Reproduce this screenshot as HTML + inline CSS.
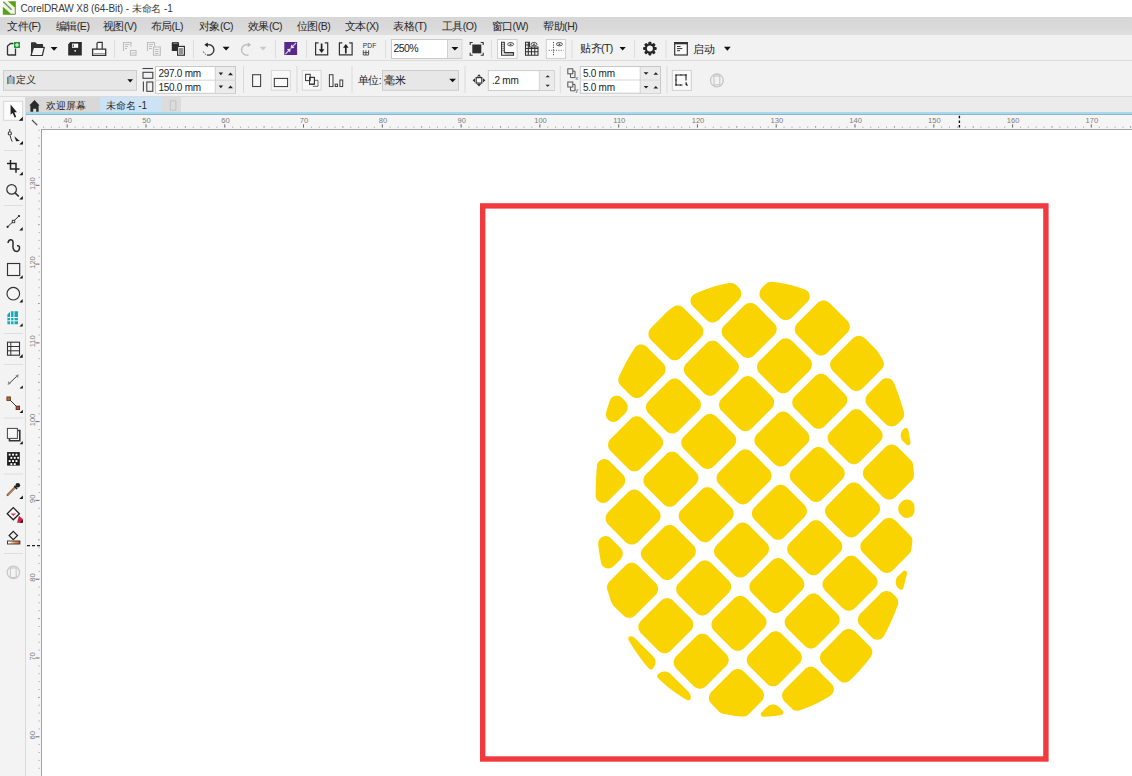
<!DOCTYPE html>
<html><head><meta charset="utf-8">
<style>
html,body{margin:0;padding:0;}
body{width:1132px;height:776px;overflow:hidden;position:relative;background:#f0f0f0;font-family:"Liberation Sans",sans-serif;color:#222;}
.a{position:absolute;}
.mi{position:absolute;top:19px;font-size:10.5px;line-height:14px;color:#2a2a2a;white-space:nowrap;letter-spacing:-0.45px}
svg{position:absolute;left:0;top:0;overflow:visible}
</style></head><body>
<!-- title bar -->
<div class="a" style="left:0;top:0;width:1132px;height:17px;background:#fff"></div>
<svg width="20" height="17" style="left:0;top:0">
 <rect x="2.8" y="1.2" width="13" height="13.5" fill="#eef8df"/>
 <path d="M7.8 1.2 H15.8 V8.6 Z" fill="#5f9f18"/>
 <path d="M2.8 6.8 V14.7 H12.2 Z" fill="#58a016"/>
 <path d="M15.3 8 V14.3 H11" fill="none" stroke="#6f8a5a" stroke-width="1"/>
 <path d="M3.4 1.8 L11.6 9.7" stroke="#7a8a70" stroke-width="1.3"/>
</svg>
<div class="a" style="left:20.5px;top:2.5px;font-size:10px;line-height:12px;color:#3a3a3a;white-space:nowrap;letter-spacing:-0.1px">CorelDRAW X8 (64-Bit) - 未命名 -1</div>
<!-- menu bar -->
<div class="a" style="left:0;top:17px;width:1132px;height:17.5px;background:linear-gradient(#d7d7d7,#d9d9d9 60%,#e0e0e0)"></div>
<span class="mi" style="left:7.4px">文件(F)</span><span class="mi" style="left:55.7px">编辑(E)</span><span class="mi" style="left:102.8px">视图(V)</span><span class="mi" style="left:150.5px">布局(L)</span><span class="mi" style="left:198.8px">对象(C)</span><span class="mi" style="left:247.8px">效果(C)</span><span class="mi" style="left:296.6px">位图(B)</span><span class="mi" style="left:344.9px">文本(X)</span><span class="mi" style="left:393.4px">表格(T)</span><span class="mi" style="left:441.6px">工具(O)</span><span class="mi" style="left:491.5px">窗口(W)</span><span class="mi" style="left:543px">帮助(H)</span>
<!-- standard toolbar -->
<div class="a" style="left:0;top:34.5px;width:1132px;height:26px;background:#f2f2f2"></div>
<div class="a" style="left:0;top:60.3px;width:1132px;height:1px;background:#dcdcdc"></div>
<!-- property bar -->
<div class="a" style="left:0;top:61.3px;width:1132px;height:35.5px;background:#f2f2f2"></div>
<div class="a" style="left:0;top:96.4px;width:1132px;height:1px;background:#dadada"></div>
<!-- tab bar -->
<div class="a" style="left:26px;top:97px;width:1106px;height:15px;background:#ebebeb"></div>
<div class="a" style="left:26px;top:97px;width:74px;height:15px;background:#d8d8d8"></div>
<div class="a" style="left:100px;top:97px;width:62px;height:15px;background:#cce3f6"></div>
<div class="a" style="left:162px;top:97px;width:19px;height:15px;background:#dcdcdc"></div>
<div class="a" style="left:26px;top:112px;width:1106px;height:2px;background:#a6d8ee"></div>
<div class="a" style="left:26px;top:114px;width:1106px;height:0.6px;background:#8fb6c8"></div>
<svg width="200" height="120" style="left:0;top:0">
<path d="M34.5 100 L39.6 105.6 H38.6 V111.7 H36.2 V108.7 H33.2 V111.7 H30.4 V105.6 H29.3 Z" fill="#2a2a2a"/>
<rect x="170.3" y="100.8" width="5.6" height="9.5" rx="1" fill="none" stroke="#c4c4c4" stroke-width="1.1"/>
</svg>
<div class="a" style="left:46px;top:98.5px;font-size:10px;line-height:13px;color:#2a2a2a;white-space:nowrap">欢迎屏幕</div>
<div class="a" style="left:105.5px;top:98.5px;font-size:10px;line-height:13px;color:#2a2a2a;white-space:nowrap">未命名 -1</div>
<!-- toolbox -->
<div class="a" style="left:0;top:97px;width:26px;height:679px;background:#f3f3f3;border-right:1px solid #dadada;box-sizing:border-box"></div>
<!-- rulers -->
<div class="a" style="left:26px;top:114.6px;width:1106px;height:14.4px;background:#f5f5f5"></div>
<div class="a" style="left:26px;top:114.6px;width:15px;height:662px;background:#f5f5f5"></div>
<!-- canvas -->
<div class="a" style="left:41px;top:129px;width:1091px;height:647px;background:#fff;border-left:1px solid #a2a2a2;border-top:1px solid #a2a2a2;box-sizing:border-box"></div>
<svg width="1132" height="776" style="font-family:'Liberation Sans',sans-serif;font-size:7.6px;fill:#7c7c7c">
<rect x="43.1" y="126.6" width="1" height="1.2" fill="#aaa"/>
<rect x="50.9" y="126.6" width="1" height="1.2" fill="#aaa"/>
<rect x="58.8" y="126.6" width="1" height="1.2" fill="#aaa"/>
<rect x="66.7" y="124.3" width="1" height="3.3" fill="#6a6a6a"/>
<rect x="74.6" y="126.6" width="1" height="1.2" fill="#aaa"/>
<rect x="82.5" y="126.6" width="1" height="1.2" fill="#aaa"/>
<rect x="90.3" y="126.6" width="1" height="1.2" fill="#aaa"/>
<rect x="98.2" y="126.6" width="1" height="1.2" fill="#aaa"/>
<rect x="106.1" y="126" width="1" height="1.8" fill="#9a9a9a"/>
<rect x="114.0" y="126.6" width="1" height="1.2" fill="#aaa"/>
<rect x="121.8" y="126.6" width="1" height="1.2" fill="#aaa"/>
<rect x="129.7" y="126.6" width="1" height="1.2" fill="#aaa"/>
<rect x="137.6" y="126.6" width="1" height="1.2" fill="#aaa"/>
<text x="67.8" y="122.8" text-anchor="middle">40</text>
<rect x="145.5" y="124.3" width="1" height="3.3" fill="#6a6a6a"/>
<rect x="153.4" y="126.6" width="1" height="1.2" fill="#aaa"/>
<rect x="161.2" y="126.6" width="1" height="1.2" fill="#aaa"/>
<rect x="169.1" y="126.6" width="1" height="1.2" fill="#aaa"/>
<rect x="177.0" y="126.6" width="1" height="1.2" fill="#aaa"/>
<rect x="184.9" y="126" width="1" height="1.8" fill="#9a9a9a"/>
<rect x="192.7" y="126.6" width="1" height="1.2" fill="#aaa"/>
<rect x="200.6" y="126.6" width="1" height="1.2" fill="#aaa"/>
<rect x="208.5" y="126.6" width="1" height="1.2" fill="#aaa"/>
<rect x="216.4" y="126.6" width="1" height="1.2" fill="#aaa"/>
<text x="146.6" y="122.8" text-anchor="middle">50</text>
<rect x="224.3" y="124.3" width="1" height="3.3" fill="#6a6a6a"/>
<rect x="232.1" y="126.6" width="1" height="1.2" fill="#aaa"/>
<rect x="240.0" y="126.6" width="1" height="1.2" fill="#aaa"/>
<rect x="247.9" y="126.6" width="1" height="1.2" fill="#aaa"/>
<rect x="255.8" y="126.6" width="1" height="1.2" fill="#aaa"/>
<rect x="263.6" y="126" width="1" height="1.8" fill="#9a9a9a"/>
<rect x="271.5" y="126.6" width="1" height="1.2" fill="#aaa"/>
<rect x="279.4" y="126.6" width="1" height="1.2" fill="#aaa"/>
<rect x="287.3" y="126.6" width="1" height="1.2" fill="#aaa"/>
<rect x="295.2" y="126.6" width="1" height="1.2" fill="#aaa"/>
<text x="225.4" y="122.8" text-anchor="middle">60</text>
<rect x="303.0" y="124.3" width="1" height="3.3" fill="#6a6a6a"/>
<rect x="310.9" y="126.6" width="1" height="1.2" fill="#aaa"/>
<rect x="318.8" y="126.6" width="1" height="1.2" fill="#aaa"/>
<rect x="326.7" y="126.6" width="1" height="1.2" fill="#aaa"/>
<rect x="334.6" y="126.6" width="1" height="1.2" fill="#aaa"/>
<rect x="342.4" y="126" width="1" height="1.8" fill="#9a9a9a"/>
<rect x="350.3" y="126.6" width="1" height="1.2" fill="#aaa"/>
<rect x="358.2" y="126.6" width="1" height="1.2" fill="#aaa"/>
<rect x="366.1" y="126.6" width="1" height="1.2" fill="#aaa"/>
<rect x="373.9" y="126.6" width="1" height="1.2" fill="#aaa"/>
<text x="304.1" y="122.8" text-anchor="middle">70</text>
<rect x="381.8" y="124.3" width="1" height="3.3" fill="#6a6a6a"/>
<rect x="389.7" y="126.6" width="1" height="1.2" fill="#aaa"/>
<rect x="397.6" y="126.6" width="1" height="1.2" fill="#aaa"/>
<rect x="405.5" y="126.6" width="1" height="1.2" fill="#aaa"/>
<rect x="413.3" y="126.6" width="1" height="1.2" fill="#aaa"/>
<rect x="421.2" y="126" width="1" height="1.8" fill="#9a9a9a"/>
<rect x="429.1" y="126.6" width="1" height="1.2" fill="#aaa"/>
<rect x="437.0" y="126.6" width="1" height="1.2" fill="#aaa"/>
<rect x="444.8" y="126.6" width="1" height="1.2" fill="#aaa"/>
<rect x="452.7" y="126.6" width="1" height="1.2" fill="#aaa"/>
<text x="382.9" y="122.8" text-anchor="middle">80</text>
<rect x="460.6" y="124.3" width="1" height="3.3" fill="#6a6a6a"/>
<rect x="468.5" y="126.6" width="1" height="1.2" fill="#aaa"/>
<rect x="476.4" y="126.6" width="1" height="1.2" fill="#aaa"/>
<rect x="484.2" y="126.6" width="1" height="1.2" fill="#aaa"/>
<rect x="492.1" y="126.6" width="1" height="1.2" fill="#aaa"/>
<rect x="500.0" y="126" width="1" height="1.8" fill="#9a9a9a"/>
<rect x="507.9" y="126.6" width="1" height="1.2" fill="#aaa"/>
<rect x="515.7" y="126.6" width="1" height="1.2" fill="#aaa"/>
<rect x="523.6" y="126.6" width="1" height="1.2" fill="#aaa"/>
<rect x="531.5" y="126.6" width="1" height="1.2" fill="#aaa"/>
<text x="461.7" y="122.8" text-anchor="middle">90</text>
<rect x="539.4" y="124.3" width="1" height="3.3" fill="#6a6a6a"/>
<rect x="547.3" y="126.6" width="1" height="1.2" fill="#aaa"/>
<rect x="555.1" y="126.6" width="1" height="1.2" fill="#aaa"/>
<rect x="563.0" y="126.6" width="1" height="1.2" fill="#aaa"/>
<rect x="570.9" y="126.6" width="1" height="1.2" fill="#aaa"/>
<rect x="578.8" y="126" width="1" height="1.8" fill="#9a9a9a"/>
<rect x="586.6" y="126.6" width="1" height="1.2" fill="#aaa"/>
<rect x="594.5" y="126.6" width="1" height="1.2" fill="#aaa"/>
<rect x="602.4" y="126.6" width="1" height="1.2" fill="#aaa"/>
<rect x="610.3" y="126.6" width="1" height="1.2" fill="#aaa"/>
<text x="540.5" y="122.8" text-anchor="middle">100</text>
<rect x="618.2" y="124.3" width="1" height="3.3" fill="#6a6a6a"/>
<rect x="626.0" y="126.6" width="1" height="1.2" fill="#aaa"/>
<rect x="633.9" y="126.6" width="1" height="1.2" fill="#aaa"/>
<rect x="641.8" y="126.6" width="1" height="1.2" fill="#aaa"/>
<rect x="649.7" y="126.6" width="1" height="1.2" fill="#aaa"/>
<rect x="657.6" y="126" width="1" height="1.8" fill="#9a9a9a"/>
<rect x="665.4" y="126.6" width="1" height="1.2" fill="#aaa"/>
<rect x="673.3" y="126.6" width="1" height="1.2" fill="#aaa"/>
<rect x="681.2" y="126.6" width="1" height="1.2" fill="#aaa"/>
<rect x="689.1" y="126.6" width="1" height="1.2" fill="#aaa"/>
<text x="619.3" y="122.8" text-anchor="middle">110</text>
<rect x="696.9" y="124.3" width="1" height="3.3" fill="#6a6a6a"/>
<rect x="704.8" y="126.6" width="1" height="1.2" fill="#aaa"/>
<rect x="712.7" y="126.6" width="1" height="1.2" fill="#aaa"/>
<rect x="720.6" y="126.6" width="1" height="1.2" fill="#aaa"/>
<rect x="728.5" y="126.6" width="1" height="1.2" fill="#aaa"/>
<rect x="736.3" y="126" width="1" height="1.8" fill="#9a9a9a"/>
<rect x="744.2" y="126.6" width="1" height="1.2" fill="#aaa"/>
<rect x="752.1" y="126.6" width="1" height="1.2" fill="#aaa"/>
<rect x="760.0" y="126.6" width="1" height="1.2" fill="#aaa"/>
<rect x="767.8" y="126.6" width="1" height="1.2" fill="#aaa"/>
<text x="698.0" y="122.8" text-anchor="middle">120</text>
<rect x="775.7" y="124.3" width="1" height="3.3" fill="#6a6a6a"/>
<rect x="783.6" y="126.6" width="1" height="1.2" fill="#aaa"/>
<rect x="791.5" y="126.6" width="1" height="1.2" fill="#aaa"/>
<rect x="799.4" y="126.6" width="1" height="1.2" fill="#aaa"/>
<rect x="807.2" y="126.6" width="1" height="1.2" fill="#aaa"/>
<rect x="815.1" y="126" width="1" height="1.8" fill="#9a9a9a"/>
<rect x="823.0" y="126.6" width="1" height="1.2" fill="#aaa"/>
<rect x="830.9" y="126.6" width="1" height="1.2" fill="#aaa"/>
<rect x="838.7" y="126.6" width="1" height="1.2" fill="#aaa"/>
<rect x="846.6" y="126.6" width="1" height="1.2" fill="#aaa"/>
<text x="776.8" y="122.8" text-anchor="middle">130</text>
<rect x="854.5" y="124.3" width="1" height="3.3" fill="#6a6a6a"/>
<rect x="862.4" y="126.6" width="1" height="1.2" fill="#aaa"/>
<rect x="870.3" y="126.6" width="1" height="1.2" fill="#aaa"/>
<rect x="878.1" y="126.6" width="1" height="1.2" fill="#aaa"/>
<rect x="886.0" y="126.6" width="1" height="1.2" fill="#aaa"/>
<rect x="893.9" y="126" width="1" height="1.8" fill="#9a9a9a"/>
<rect x="901.8" y="126.6" width="1" height="1.2" fill="#aaa"/>
<rect x="909.6" y="126.6" width="1" height="1.2" fill="#aaa"/>
<rect x="917.5" y="126.6" width="1" height="1.2" fill="#aaa"/>
<rect x="925.4" y="126.6" width="1" height="1.2" fill="#aaa"/>
<text x="855.6" y="122.8" text-anchor="middle">140</text>
<rect x="933.3" y="124.3" width="1" height="3.3" fill="#6a6a6a"/>
<rect x="941.2" y="126.6" width="1" height="1.2" fill="#aaa"/>
<rect x="949.0" y="126.6" width="1" height="1.2" fill="#aaa"/>
<rect x="956.9" y="126.6" width="1" height="1.2" fill="#aaa"/>
<rect x="964.8" y="126.6" width="1" height="1.2" fill="#aaa"/>
<rect x="972.7" y="126" width="1" height="1.8" fill="#9a9a9a"/>
<rect x="980.5" y="126.6" width="1" height="1.2" fill="#aaa"/>
<rect x="988.4" y="126.6" width="1" height="1.2" fill="#aaa"/>
<rect x="996.3" y="126.6" width="1" height="1.2" fill="#aaa"/>
<rect x="1004.2" y="126.6" width="1" height="1.2" fill="#aaa"/>
<text x="934.4" y="122.8" text-anchor="middle">150</text>
<rect x="1012.1" y="124.3" width="1" height="3.3" fill="#6a6a6a"/>
<rect x="1019.9" y="126.6" width="1" height="1.2" fill="#aaa"/>
<rect x="1027.8" y="126.6" width="1" height="1.2" fill="#aaa"/>
<rect x="1035.7" y="126.6" width="1" height="1.2" fill="#aaa"/>
<rect x="1043.6" y="126.6" width="1" height="1.2" fill="#aaa"/>
<rect x="1051.5" y="126" width="1" height="1.8" fill="#9a9a9a"/>
<rect x="1059.3" y="126.6" width="1" height="1.2" fill="#aaa"/>
<rect x="1067.2" y="126.6" width="1" height="1.2" fill="#aaa"/>
<rect x="1075.1" y="126.6" width="1" height="1.2" fill="#aaa"/>
<rect x="1083.0" y="126.6" width="1" height="1.2" fill="#aaa"/>
<text x="1013.2" y="122.8" text-anchor="middle">160</text>
<rect x="1090.8" y="124.3" width="1" height="3.3" fill="#6a6a6a"/>
<rect x="1098.7" y="126.6" width="1" height="1.2" fill="#aaa"/>
<rect x="1106.6" y="126.6" width="1" height="1.2" fill="#aaa"/>
<rect x="1114.5" y="126.6" width="1" height="1.2" fill="#aaa"/>
<rect x="1122.4" y="126.6" width="1" height="1.2" fill="#aaa"/>
<rect x="1130.2" y="126" width="1" height="1.8" fill="#9a9a9a"/>
<text x="1091.9" y="122.8" text-anchor="middle">170</text>
<rect x="38.6" y="129.7" width="1.2" height="1" fill="#aaa"/>
<rect x="38.6" y="137.5" width="1.2" height="1" fill="#aaa"/>
<rect x="38" y="145.4" width="1.8" height="1" fill="#9a9a9a"/>
<rect x="38.6" y="153.3" width="1.2" height="1" fill="#aaa"/>
<rect x="38.6" y="161.2" width="1.2" height="1" fill="#aaa"/>
<rect x="38.6" y="169.0" width="1.2" height="1" fill="#aaa"/>
<rect x="38.6" y="176.9" width="1.2" height="1" fill="#aaa"/>
<rect x="35.5" y="184.8" width="4" height="1" fill="#6a6a6a"/>
<rect x="38.6" y="192.7" width="1.2" height="1" fill="#aaa"/>
<rect x="38.6" y="200.6" width="1.2" height="1" fill="#aaa"/>
<rect x="38.6" y="208.4" width="1.2" height="1" fill="#aaa"/>
<rect x="38.6" y="216.3" width="1.2" height="1" fill="#aaa"/>
<rect x="38" y="224.2" width="1.8" height="1" fill="#9a9a9a"/>
<rect x="38.6" y="232.1" width="1.2" height="1" fill="#aaa"/>
<rect x="38.6" y="239.9" width="1.2" height="1" fill="#aaa"/>
<rect x="38.6" y="247.8" width="1.2" height="1" fill="#aaa"/>
<rect x="38.6" y="255.7" width="1.2" height="1" fill="#aaa"/>
<text transform="translate(35.3 183.7) rotate(-90)" text-anchor="middle">130</text>
<rect x="35.5" y="263.6" width="4" height="1" fill="#6a6a6a"/>
<rect x="38.6" y="271.5" width="1.2" height="1" fill="#aaa"/>
<rect x="38.6" y="279.3" width="1.2" height="1" fill="#aaa"/>
<rect x="38.6" y="287.2" width="1.2" height="1" fill="#aaa"/>
<rect x="38.6" y="295.1" width="1.2" height="1" fill="#aaa"/>
<rect x="38" y="303.0" width="1.8" height="1" fill="#9a9a9a"/>
<rect x="38.6" y="310.8" width="1.2" height="1" fill="#aaa"/>
<rect x="38.6" y="318.7" width="1.2" height="1" fill="#aaa"/>
<rect x="38.6" y="326.6" width="1.2" height="1" fill="#aaa"/>
<rect x="38.6" y="334.5" width="1.2" height="1" fill="#aaa"/>
<text transform="translate(35.3 262.5) rotate(-90)" text-anchor="middle">120</text>
<rect x="35.5" y="342.4" width="4" height="1" fill="#6a6a6a"/>
<rect x="38.6" y="350.2" width="1.2" height="1" fill="#aaa"/>
<rect x="38.6" y="358.1" width="1.2" height="1" fill="#aaa"/>
<rect x="38.6" y="366.0" width="1.2" height="1" fill="#aaa"/>
<rect x="38.6" y="373.9" width="1.2" height="1" fill="#aaa"/>
<rect x="38" y="381.8" width="1.8" height="1" fill="#9a9a9a"/>
<rect x="38.6" y="389.6" width="1.2" height="1" fill="#aaa"/>
<rect x="38.6" y="397.5" width="1.2" height="1" fill="#aaa"/>
<rect x="38.6" y="405.4" width="1.2" height="1" fill="#aaa"/>
<rect x="38.6" y="413.3" width="1.2" height="1" fill="#aaa"/>
<text transform="translate(35.3 341.3) rotate(-90)" text-anchor="middle">110</text>
<rect x="35.5" y="421.1" width="4" height="1" fill="#6a6a6a"/>
<rect x="38.6" y="429.0" width="1.2" height="1" fill="#aaa"/>
<rect x="38.6" y="436.9" width="1.2" height="1" fill="#aaa"/>
<rect x="38.6" y="444.8" width="1.2" height="1" fill="#aaa"/>
<rect x="38.6" y="452.7" width="1.2" height="1" fill="#aaa"/>
<rect x="38" y="460.5" width="1.8" height="1" fill="#9a9a9a"/>
<rect x="38.6" y="468.4" width="1.2" height="1" fill="#aaa"/>
<rect x="38.6" y="476.3" width="1.2" height="1" fill="#aaa"/>
<rect x="38.6" y="484.2" width="1.2" height="1" fill="#aaa"/>
<rect x="38.6" y="492.0" width="1.2" height="1" fill="#aaa"/>
<text transform="translate(35.3 420.0) rotate(-90)" text-anchor="middle">100</text>
<rect x="35.5" y="499.9" width="4" height="1" fill="#6a6a6a"/>
<rect x="38.6" y="507.8" width="1.2" height="1" fill="#aaa"/>
<rect x="38.6" y="515.7" width="1.2" height="1" fill="#aaa"/>
<rect x="38.6" y="523.6" width="1.2" height="1" fill="#aaa"/>
<rect x="38.6" y="531.4" width="1.2" height="1" fill="#aaa"/>
<rect x="38" y="539.3" width="1.8" height="1" fill="#9a9a9a"/>
<rect x="38.6" y="547.2" width="1.2" height="1" fill="#aaa"/>
<rect x="38.6" y="555.1" width="1.2" height="1" fill="#aaa"/>
<rect x="38.6" y="562.9" width="1.2" height="1" fill="#aaa"/>
<rect x="38.6" y="570.8" width="1.2" height="1" fill="#aaa"/>
<text transform="translate(35.3 498.8) rotate(-90)" text-anchor="middle">90</text>
<rect x="35.5" y="578.7" width="4" height="1" fill="#6a6a6a"/>
<rect x="38.6" y="586.6" width="1.2" height="1" fill="#aaa"/>
<rect x="38.6" y="594.5" width="1.2" height="1" fill="#aaa"/>
<rect x="38.6" y="602.3" width="1.2" height="1" fill="#aaa"/>
<rect x="38.6" y="610.2" width="1.2" height="1" fill="#aaa"/>
<rect x="38" y="618.1" width="1.8" height="1" fill="#9a9a9a"/>
<rect x="38.6" y="626.0" width="1.2" height="1" fill="#aaa"/>
<rect x="38.6" y="633.8" width="1.2" height="1" fill="#aaa"/>
<rect x="38.6" y="641.7" width="1.2" height="1" fill="#aaa"/>
<rect x="38.6" y="649.6" width="1.2" height="1" fill="#aaa"/>
<text transform="translate(35.3 577.6) rotate(-90)" text-anchor="middle">80</text>
<rect x="35.5" y="657.5" width="4" height="1" fill="#6a6a6a"/>
<rect x="38.6" y="665.4" width="1.2" height="1" fill="#aaa"/>
<rect x="38.6" y="673.2" width="1.2" height="1" fill="#aaa"/>
<rect x="38.6" y="681.1" width="1.2" height="1" fill="#aaa"/>
<rect x="38.6" y="689.0" width="1.2" height="1" fill="#aaa"/>
<rect x="38" y="696.9" width="1.8" height="1" fill="#9a9a9a"/>
<rect x="38.6" y="704.7" width="1.2" height="1" fill="#aaa"/>
<rect x="38.6" y="712.6" width="1.2" height="1" fill="#aaa"/>
<rect x="38.6" y="720.5" width="1.2" height="1" fill="#aaa"/>
<rect x="38.6" y="728.4" width="1.2" height="1" fill="#aaa"/>
<text transform="translate(35.3 656.4) rotate(-90)" text-anchor="middle">70</text>
<rect x="35.5" y="736.3" width="4" height="1" fill="#6a6a6a"/>
<rect x="38.6" y="744.1" width="1.2" height="1" fill="#aaa"/>
<rect x="38.6" y="752.0" width="1.2" height="1" fill="#aaa"/>
<rect x="38.6" y="759.9" width="1.2" height="1" fill="#aaa"/>
<rect x="38.6" y="767.8" width="1.2" height="1" fill="#aaa"/>
<text transform="translate(35.3 735.2) rotate(-90)" text-anchor="middle">60</text>
<path d="M959.4 115.7 V128" stroke="#111" stroke-width="1.4" stroke-dasharray="2.5 2.2"/>
<path d="M27 545.6 H40.2" stroke="#222" stroke-width="1.3" stroke-dasharray="3 2"/>
<path d="M32 120 L37.3 125.2" stroke="#555" stroke-width="1.2"/>
</svg>
<svg width="1132" height="62" style="left:0;top:0">
<g fill="none" stroke="#333" stroke-width="1.3">
 <!-- new doc -->
 <path d="M7.5 55 V46 L10.5 43.5 H13.5 M15.5 48.5 V55 H7.5"/>
</g>
<rect x="14" y="42" width="6" height="6" fill="#1f9a3c"/>
<rect x="16.5" y="43" width="1" height="4" fill="#fff"/><rect x="15" y="44.5" width="4" height="1" fill="#fff"/>
<!-- open folder -->
<path d="M31 55.5 V42.8 Q31 42.2 31.6 42.2 H35.5 L37 44 H43 V47 H34.5 L32.2 55.5 Z" fill="#333"/>
<path d="M31 55.5 L33.5 47.3 H44.3 L42.3 55.5 Z" fill="#f4f4f4" stroke="#333" stroke-width="1.2" stroke-linejoin="round"/>
<!-- dropdown arrows -->
<path d="M50.6 47 H57.5 L54.05 50.8 Z" fill="#111"/>
<!-- save -->
<path d="M68.2 44.2 L70.4 42 H81.8 V55.5 H68.2 Z" fill="#2b2b2b"/>
<rect x="72" y="43.6" width="6.2" height="4.2" fill="#fff"/>
<rect x="72.6" y="44.4" width="1.2" height="2.6" fill="#555"/>
<circle cx="75.2" cy="50.8" r="0.9" fill="#fff"/>
<!-- print -->
<path d="M97 49 V43.2 L98 42.3 H102.2 V49" fill="#fafafa" stroke="#333" stroke-width="1.2"/>
<path d="M92.6 55.3 V49.2 H105.7 V55.3 Z" fill="#fafafa" stroke="#333" stroke-width="1.3"/>
<path d="M93.5 53.5 H105" stroke="#999" stroke-width="1"/>
<!-- separators -->
<g fill="#dcdcdc">
<rect x="114" y="40" width="1" height="18"/>
<rect x="193" y="40" width="1" height="18"/>
<rect x="275" y="40" width="1" height="18"/>
<rect x="306" y="40" width="1" height="18"/>
<rect x="385" y="40" width="1" height="18"/>
<rect x="491" y="40" width="1" height="18"/>
<rect x="571.5" y="40" width="1" height="18"/>
<rect x="634" y="40" width="1" height="18"/>
<rect x="665.5" y="40" width="1" height="18"/>
</g>
<!-- disabled import-ish -->
<g fill="none" stroke="#bdbdbd" stroke-width="1.1">
 <path d="M123.5 51 V42.5 H131 V46.5"/>
 <path d="M125 44.5 H129.5 M125 46.5 H128 M125 48.5 H127"/>
 <path d="M130.5 50.5 H136 V55.3 H130.5 Z"/>
 <path d="M131.8 53 H134.8"/>
 <path d="M147.5 51 V42.5 H154.5 V46.5"/>
 <path d="M149 44.5 H153 M149 46.5 H152 M149 48.5 H152"/>
 <path d="M153.5 47 H160.3 V55.3 H153.5 Z"/>
 <path d="M155 49.5 H158.5 M155 51.5 H158.5 M155 53.5 H158.5"/>
</g>
<!-- paste -->
<path d="M171.8 43.3 Q171.8 42 173 42 H177.8 Q179 42 179 43.3 V51 H171.8 Z" fill="#2d2d2d"/>
<path d="M173.2 43.2 H177.6" stroke="#aaa" stroke-width="0.9"/>
<rect x="177.6" y="46.4" width="6.8" height="8.8" fill="#f4f4f4" stroke="#333" stroke-width="1.2"/>
<path d="M179 49 H183 M179 51 H183 M179 53 H183" stroke="#333" stroke-width="1.1"/>
<!-- undo -->
<path d="M206.5 45.2 A5.2 5.2 0 1 1 207 54.8" fill="none" stroke="#333" stroke-width="1.4"/>
<path d="M203.2 51.5 L204.3 53 M204.9 54 L206 54.6" stroke="#777" stroke-width="1.1"/>
<path d="M204.3 44.8 L207.8 42.4 V47.2 Z" fill="#222"/>
<path d="M222.6 46.8 H229.6 L226.1 50.6 Z" fill="#111"/>
<!-- redo disabled -->
<path d="M249 45.2 A5.2 5.2 0 1 0 248.5 54.8" fill="none" stroke="#bbb" stroke-width="1.4"/>
<path d="M251.2 44.8 L247.7 42.4 V47.2 Z" fill="#bbb"/>
<path d="M259.7 46.8 H266.4 L263 50.4 Z" fill="#c8c8c8"/>
<!-- purple -->
<rect x="284.3" y="42" width="12.8" height="13" fill="#57298a"/>
<path d="M296 43 L291.6 47.4 M285.4 54 L289.8 49.6" stroke="#d7c7ee" stroke-width="1.2"/>
<path d="M290.6 48.4 L294.5 47.8 L291.2 44.5 Z M290.8 48.6 L286.8 49.2 L290.1 52.5 Z" fill="#e6dcf3"/>
<!-- import / export -->
<g fill="none" stroke="#333" stroke-width="1.2">
 <path d="M318.5 42.8 H315.6 V54.9 H327.7 V42.8 H324.8"/>
 <path d="M342.3 42.8 H339.4 V54.9 H352.1 V42.8 H349.2"/>
</g>
<path d="M321.6 43.5 V50" stroke="#222" stroke-width="1.7"/>
<path d="M318.8 49.3 H324.4 L321.6 53 Z" fill="#222"/>
<path d="M345.8 53.5 V47" stroke="#222" stroke-width="1.7"/>
<path d="M343 47.8 H348.6 L345.8 44 Z" fill="#222"/>
<!-- PDF -->
<text x="362.8" y="48.3" font-family="Liberation Sans" font-size="6.8" fill="#333" textLength="13.6" lengthAdjust="spacingAndGlyphs">PDF</text>
<path d="M363.3 50.3 V55 M363.3 52.6 H368.6 M365.9 50.3 V55 M368.6 50.3 V55 M363.3 55 H368.6" stroke="#444" stroke-width="0.9" fill="none"/>
<!-- zoom combo -->
<rect x="391.5" y="39.5" width="70.3" height="19" fill="#fff" stroke="#c9c9c9" stroke-width="1"/>
<rect x="447.4" y="40" width="14" height="18" fill="#ebebeb"/>
<rect x="447" y="40" width="1" height="18" fill="#d0d0d0"/>
<path d="M451.4 47 H458.4 L454.9 50.6 Z" fill="#111"/>
<!-- zoom fit -->
<path d="M470.2 45 V42.5 H472.7 M480.7 42.5 H483.2 V45 M483.2 52.7 V55.2 H480.7 M472.7 55.2 H470.2 V52.7" fill="none" stroke="#333" stroke-width="1.1"/>
<rect x="472.3" y="44.5" width="9" height="8.8" fill="#2e2e2e"/>
<!-- rulers button -->
<rect x="497.5" y="39.5" width="19.6" height="19" fill="#fbfbfb" stroke="#cfcfcf" stroke-width="1"/>
<path d="M501.6 42.3 H504.3 V52.6 H513.5 V55.3 H501.6 Z" fill="none" stroke="#333" stroke-width="1.1"/>
<path d="M502.5 44.5 H503.5 M502.5 46.5 H503.5 M502.5 48.5 H503.5 M502.5 50.5 H503.5 M506 53.5 V54.5 M508 53.5 V54.5 M510 53.5 V54.5 M512 53.5 V54.5" stroke="#333" stroke-width="0.8"/>
<ellipse cx="510.6" cy="44.2" rx="3" ry="1.7" fill="none" stroke="#444" stroke-width="0.9"/>
<circle cx="510.6" cy="44.4" r="0.9" fill="#444"/>
<!-- grid -->
<path d="M525.5 42.3 H529.5 V47 H538 V55.3 H525.5 Z M525.5 45 H529.5 M525.5 48.5 H538 M525.5 51.8 H538 M528.3 42.3 V55.3 M531.5 47 V55.3 M534.8 47 V55.3" fill="none" stroke="#333" stroke-width="1.05"/>
<ellipse cx="534" cy="44.2" rx="3" ry="1.7" fill="none" stroke="#444" stroke-width="0.9"/>
<circle cx="534" cy="44.4" r="0.9" fill="#444"/>
<!-- guides -->
<rect x="546.3" y="39.5" width="19.3" height="19" fill="#fbfbfb" stroke="#cfcfcf" stroke-width="1"/>
<path d="M553.5 42 V55.3" stroke="#444" stroke-width="0.9" stroke-dasharray="1.2 1.2"/>
<path d="M548.7 50.4 H563.5" stroke="#777" stroke-width="0.9" stroke-dasharray="1.2 1.2"/>
<ellipse cx="559.4" cy="44.2" rx="3" ry="1.7" fill="none" stroke="#444" stroke-width="0.9"/>
<circle cx="559.4" cy="44.4" r="0.9" fill="#444"/>
<path d="M619.5 47 H625.8 L622.65 50.6 Z" fill="#111"/>
<!-- gear -->
<g transform="translate(649.9 48.6)" fill="#262626">
 <circle r="5"/>
 <g id="teeth">
 <rect x="-1.5" y="-6.8" width="3" height="3" rx="0.8"/>
 <rect x="-1.5" y="-6.8" width="3" height="3" rx="0.8" transform="rotate(45)"/>
 <rect x="-1.5" y="-6.8" width="3" height="3" rx="0.8" transform="rotate(90)"/>
 <rect x="-1.5" y="-6.8" width="3" height="3" rx="0.8" transform="rotate(135)"/>
 <rect x="-1.5" y="-6.8" width="3" height="3" rx="0.8" transform="rotate(180)"/>
 <rect x="-1.5" y="-6.8" width="3" height="3" rx="0.8" transform="rotate(225)"/>
 <rect x="-1.5" y="-6.8" width="3" height="3" rx="0.8" transform="rotate(270)"/>
 <rect x="-1.5" y="-6.8" width="3" height="3" rx="0.8" transform="rotate(315)"/>
 </g>
 <circle r="3" fill="#f4f4f4"/>
</g>
<!-- window icon -->
<rect x="674.7" y="42.6" width="12.6" height="12.4" fill="#fafafa" stroke="#333" stroke-width="1.2"/>
<rect x="674.2" y="42" width="13.6" height="2.3" fill="#333"/>
<path d="M677 46.5 H680.5 M677 48.6 H682.3 M677 50.7 H680" stroke="#333" stroke-width="1"/>
<path d="M724 46.7 H730.7 L727.35 50.7 Z" fill="#111"/>
</svg>

<svg width="1132" height="100" style="left:0;top:0">
<!-- preset combo -->
<rect x="3.5" y="70.5" width="133" height="19.8" fill="#e7e7e7" stroke="#cdcdcd" stroke-width="1"/>
<path d="M127.4 79.2 H133 L130.2 82.4 Z" fill="#111"/>
<!-- size icons -->
<path d="M142.5 68.5 H153" stroke="#444" stroke-width="1.1"/>
<rect x="143" y="72.3" width="9.8" height="6" fill="none" stroke="#444" stroke-width="1.1"/>
<path d="M143.4 81.6 V91.5" stroke="#444" stroke-width="1.1"/>
<rect x="146.8" y="82" width="6" height="9.3" fill="none" stroke="#444" stroke-width="1.1"/>
<!-- size input -->
<rect x="155.5" y="66.5" width="80" height="26.8" fill="#fff" stroke="#c8c8c8" stroke-width="1"/>
<rect x="215.5" y="67" width="19.5" height="25.8" fill="#ebebeb"/>
<path d="M155.5 80.2 H235.5" stroke="#d6d6d6" stroke-width="1"/>
<path d="M215.3 66.5 V93.3" stroke="#d0d0d0" stroke-width="1"/>
<path d="M218.6 72.6 H223.1 L220.85 75.3 Z M228 75.3 H233 L230.5 72.6 Z M218.6 85.6 H223.1 L220.85 88.3 Z M228 88.3 H233 L230.5 85.6 Z" fill="#222"/>
<!-- separators -->
<g fill="#dadada">
<rect x="243" y="66" width="1" height="27"/>
<rect x="296.4" y="66" width="1" height="27"/>
<rect x="351.5" y="66" width="1" height="27"/>
<rect x="464.5" y="66" width="1" height="27"/>
<rect x="559.8" y="66" width="1" height="27"/>
<rect x="666.5" y="66" width="1" height="27"/>
</g>
<!-- portrait / landscape -->
<rect x="252.6" y="74.7" width="8" height="11.8" fill="#f8f8f8" stroke="#444" stroke-width="1.1"/>
<rect x="271.3" y="70.5" width="19" height="19.6" fill="#f9f9f9" stroke="#d6d6d6" stroke-width="1"/>
<rect x="274.3" y="78.4" width="13.3" height="8.2" fill="none" stroke="#333" stroke-width="1"/>
<!-- all pages -->
<rect x="302.3" y="70.5" width="18.8" height="19.6" fill="#f9f9f9" stroke="#d6d6d6" stroke-width="1"/>
<path d="M313.2 80.3 H318 V86.3 H312.8" fill="none" stroke="#666" stroke-width="1"/>
<rect x="309.5" y="77.4" width="4.9" height="6.8" fill="#f9f9f9" stroke="#333" stroke-width="1"/>
<rect x="305.6" y="74.3" width="4.6" height="6.3" fill="#f9f9f9" stroke="#333" stroke-width="1"/>
<rect x="309.5" y="77.4" width="4.9" height="6.8" fill="none" stroke="#333" stroke-width="1"/>
<!-- current page -->
<rect x="329.4" y="74.7" width="3.6" height="11.8" fill="#f8f8f8" stroke="#444" stroke-width="1.05"/>
<rect x="335.2" y="84.2" width="2.3" height="2.3" fill="#f8f8f8" stroke="#444" stroke-width="1.05"/>
<rect x="339.9" y="80" width="2.8" height="6.5" fill="#f8f8f8" stroke="#444" stroke-width="1.05"/>
<!-- units combo -->
<rect x="382.5" y="70.5" width="76" height="19.8" fill="#e7e7e7" stroke="#cdcdcd" stroke-width="1"/>
<path d="M449.2 78.8 H456 L452.6 82.2 Z" fill="#111"/>
<!-- nudge icon -->
<g fill="#333">
<path d="M479 74.2 L481.2 76.6 H476.8 Z M479 86.5 L481.2 84.1 H476.8 Z M472.6 80.35 L475 78.2 V82.5 Z M485.4 80.35 L483 78.2 V82.5 Z"/>
</g>
<rect x="476.2" y="77.6" width="5.6" height="5.5" fill="#fafafa" stroke="#333" stroke-width="1.2"/>
<!-- nudge input -->
<rect x="488.3" y="70.6" width="66" height="19.9" fill="#fff" stroke="#cdcdcd" stroke-width="1"/>
<rect x="539.5" y="71.1" width="14.3" height="18.9" fill="#ebebeb"/>
<path d="M539.3 70.6 V90.5" stroke="#d0d0d0" stroke-width="1"/>
<path d="M545.5 77.3 H549.9 L547.7 75.3 Z M545.5 84.8 H549.9 L547.7 86.8 Z" fill="#222"/>
<!-- dup icons -->
<g fill="none" stroke="#555" stroke-width="1">
<rect x="567.8" y="68.8" width="5" height="5"/>
<path d="M570.5 73.8 V77.6 H575 V71.2 H572.8"/>
<rect x="567.8" y="82" width="5" height="5"/>
<path d="M570.5 87 V90.8 H575 V84.4 H572.8"/>
</g>
<text x="575.3" y="79.5" font-family="Liberation Sans" font-size="6" fill="#555">x</text>
<text x="575.3" y="92.4" font-family="Liberation Sans" font-size="6" fill="#555">y</text>
<!-- dup input -->
<rect x="580.3" y="66.5" width="80.2" height="26.7" fill="#fff" stroke="#c8c8c8" stroke-width="1"/>
<rect x="640.4" y="67" width="19.6" height="25.7" fill="#ebebeb"/>
<path d="M580.3 80 H660.5" stroke="#d6d6d6" stroke-width="1"/>
<path d="M640.2 66.5 V93.2" stroke="#d0d0d0" stroke-width="1"/>
<path d="M643.6 72.3 H648.5 L646.05 74.8 Z M653.4 74.8 H658.2 L655.8 72.3 Z M643.6 85.9 H648.5 L646.05 88.4 Z M653.4 88.4 H658.2 L655.8 85.9 Z" fill="#222"/>
<!-- bordered button -->
<rect x="672.3" y="70.4" width="19" height="20" fill="#fafafa" stroke="#d0d0d0" stroke-width="1"/>
<path d="M676 75 H686 V80.5 M676 75 V85 H682.5" fill="none" stroke="#222" stroke-width="1.1"/>
<g fill="#222"><circle cx="676" cy="75" r="0.8"/><circle cx="681" cy="74.9" r="0.7"/><circle cx="686" cy="75" r="0.8"/><circle cx="676" cy="80" r="0.7"/><circle cx="676" cy="85" r="0.8"/><circle cx="680.5" cy="85.1" r="0.7"/></g>
<path d="M686 82.2 L687.5 85.6 L685.8 85 Z" fill="#222" stroke="#222" stroke-width="0.6"/>
<!-- disabled circle -->
<circle cx="716.9" cy="80.4" r="6.4" fill="none" stroke="#c6c6c6" stroke-width="1.3"/>
<rect x="714" y="76" width="5.8" height="8.8" fill="none" stroke="#c6c6c6" stroke-width="1.1"/>
</svg>

<svg width="30" height="776" style="left:0;top:0">
<!-- pick -->
<rect x="3.7" y="101.3" width="19" height="19" fill="#fcfcfc" stroke="#d6d6d6" stroke-width="1"/>
<path d="M10.6 104.6 V114.8 L12.6 112.9 L14.6 117.6 L16.2 116.9 L14.3 112.3 H17 Z" fill="#222"/>
<g fill="#111">
<path d="M22.8 116.8 V120.8 H18.8 Z"/>
<path d="M23 140.9 V144.6 H19.3 Z"/>
<path d="M22.8 171.7 V175.2 H19.3 Z"/>
<path d="M22.8 196 V199.6 H19.3 Z"/>
<path d="M22.7 227 V230.4 H19.3 Z"/>
<path d="M22.7 275.3 V278.6 H19.4 Z"/>
<path d="M22.7 299 V302.4 H19.4 Z"/>
<path d="M22.7 323.2 V326.6 H19.4 Z"/>
<path d="M22.7 353.9 V357.7 H19.2 Z"/>
<path d="M22.8 385.5 V388.6 H19.5 Z"/>
<path d="M22.8 409.8 V412.9 H19.6 Z"/>
<path d="M22.8 441 V444.2 H19.6 Z"/>
<path d="M22.9 495.5 V499 H19.3 Z"/>
</g>
<!-- shape tool -->
<path d="M9.8 129 V131.3 M10.2 135.5 Q10.6 138.5 12.2 141.6" fill="none" stroke="#333" stroke-width="1"/>
<circle cx="9.8" cy="133.4" r="1.6" fill="#fff" stroke="#333" stroke-width="1.1"/>
<path d="M14.3 136.3 L19.8 140.9 L16.2 141.2 Z" fill="#222"/>
<!-- separators -->
<g fill="#dedede">
<rect x="4" y="150" width="19" height="1"/>
<rect x="4" y="205" width="19" height="1"/>
<rect x="4" y="333" width="19" height="1"/>
<rect x="4" y="364" width="19" height="1"/>
<rect x="4" y="417.5" width="19" height="1"/>
<rect x="4" y="473.5" width="19" height="1"/>
<rect x="4" y="553" width="19" height="1"/>
</g>
<!-- crop -->
<path d="M10.5 160 V169 H19.5 M7 163.5 H16 V172.8" fill="none" stroke="#222" stroke-width="1.5"/>
<!-- zoom -->
<circle cx="11.6" cy="189.4" r="4.8" fill="none" stroke="#333" stroke-width="1.2"/>
<path d="M15 192.8 L18.8 196.5" stroke="#333" stroke-width="1.7"/>
<!-- line tool -->
<path d="M7.6 226.8 L19 216" stroke="#333" stroke-width="1"/>
<circle cx="7.6" cy="226.8" r="1.1" fill="#222"/><circle cx="19" cy="216" r="1.1" fill="#222"/>
<rect x="12.3" y="220.3" width="2.4" height="2.4" fill="#fff" stroke="#333" stroke-width="0.9"/>
<!-- s curve -->
<path d="M8 243 Q8.5 239.5 11 239.7 Q13.5 240 13 244.5 Q12.5 249.5 15 251 Q18.5 252.5 19.5 248.5 Q20 245.5 17 245.8" fill="none" stroke="#2a2a2a" stroke-width="1.5"/>
<!-- rectangle -->
<rect x="7.5" y="263.5" width="12.2" height="12" fill="#f6f6f6" stroke="#333" stroke-width="1.15"/>
<!-- ellipse -->
<circle cx="13.3" cy="293.7" r="6.3" fill="#f6f6f6" stroke="#333" stroke-width="1.15"/>
<!-- graph paper -->
<path d="M7.4 314.5 L10.6 311.2 H18 V324.3 H7.4 Z" fill="#1aa6b8"/>
<path d="M7.4 317.5 H18 M7.4 320.8 H18 M10.6 311.2 V324.3 M14 311.2 V324.3" stroke="#e8fbfc" stroke-width="1"/>
<!-- table -->
<rect x="7.5" y="342.2" width="12" height="13" fill="#f6f6f6" stroke="#333" stroke-width="1.1"/>
<path d="M7.5 346.5 H19.5 M7.5 350.8 H19.5 M10.8 342.2 V355.2" stroke="#333" stroke-width="1"/>
<!-- dimension -->
<path d="M8.8 383.8 L17.8 375.3" stroke="#444" stroke-width="1"/>
<path d="M7.6 385 L8.3 381.2 L11 383.6 Z M18.8 374.2 L18 378 L15.4 375.5 Z" fill="#8a8a8a"/>
<!-- connector -->
<path d="M8.6 398.6 L17.9 407.9" stroke="#333" stroke-width="1"/>
<rect x="6.9" y="396.9" width="3.5" height="3.5" fill="#b06a3a" stroke="#5a2f14" stroke-width="0.8"/>
<rect x="16.1" y="406.1" width="3.5" height="3.5" fill="#b04a3a" stroke="#5a2014" stroke-width="0.8"/>
<!-- drop shadow -->
<path d="M9.5 438.8 V440.8 H19.8 V430.5 H17.8" fill="none" stroke="#333" stroke-width="1.6"/>
<rect x="7.4" y="428.4" width="10" height="10" fill="#f8f8f8" stroke="#444" stroke-width="1"/>
<!-- checker -->
<rect x="7.1" y="452.1" width="12.7" height="13.5" fill="#1c1c1c"/>
<g fill="#fff">
<rect x="8.7" y="453.7" width="1.9" height="1.9"/><rect x="12.1" y="453.7" width="1.9" height="1.9"/><rect x="15.5" y="453.7" width="1.9" height="1.9"/>
<rect x="10.4" y="456.9" width="1.9" height="1.9"/><rect x="13.8" y="456.9" width="1.9" height="1.9"/><rect x="17.2" y="456.9" width="1.9" height="1.9"/>
<rect x="8.7" y="460.1" width="1.9" height="1.9"/><rect x="12.1" y="460.1" width="1.9" height="1.9"/><rect x="15.5" y="460.1" width="1.9" height="1.9"/>
<rect x="10.4" y="463.2" width="1.9" height="1.9"/><rect x="13.8" y="463.2" width="1.9" height="1.9"/>
</g>
<!-- eyedropper -->
<path d="M7.6 495 L15.5 487" stroke="#8a5a38" stroke-width="2.2" stroke-linecap="round"/>
<path d="M8 494.8 L14.8 488" stroke="#e3b48c" stroke-width="0.7"/>
<circle cx="17.8" cy="485.3" r="2.3" fill="#222"/>
<path d="M14.2 486 L17.1 488.9" stroke="#222" stroke-width="1.4"/>
<!-- fill -->
<path d="M13.3 507.6 L19.4 513.7 L13.3 519.8 L7.2 513.7 Z" fill="#fafafa" stroke="#222" stroke-width="1.3"/>
<path d="M10.5 513.6 H16.2 L13.3 516 Z" fill="#e0345a"/>
<path d="M17 522.7 L19 515.8 L22.9 519.2 V522.7 Z" fill="#d01c3c"/>
<path d="M19.8 522.7 H22.9 V519.6 Z" fill="#111"/>
<!-- smart fill -->
<path d="M13.3 531.3 L17.5 535.5 L13.3 539.7 L9.1 535.5 Z" fill="#f0f0f0" stroke="#222" stroke-width="1.2"/>
<defs><linearGradient id="sfg" x1="0" x2="1"><stop offset="0.15" stop-color="#fff"/><stop offset="0.55" stop-color="#e8a070"/><stop offset="1" stop-color="#b85a2a"/></linearGradient></defs>
<rect x="7.5" y="541" width="12.4" height="3" fill="url(#sfg)" stroke="#3a2a20" stroke-width="0.9"/>
<!-- disabled -->
<circle cx="13.4" cy="572.4" r="6.2" fill="none" stroke="#c8c8c8" stroke-width="1.3"/>
<rect x="10.4" y="568" width="5.8" height="9.5" fill="none" stroke="#c8c8c8" stroke-width="1.1"/>
</svg>

<svg width="1132" height="100" style="left:0;top:0;font-family:'Liberation Sans',sans-serif;fill:#222">
<text x="393.5" y="51.9" font-size="10.5" letter-spacing="-0.6">250%</text>
<text x="580.2" y="52" font-size="10.5" letter-spacing="-0.6">贴齐(T)</text>
<text x="693" y="52.6" font-size="10.5">启动</text>
<text x="6" y="83.4" font-size="10.2">自定义</text>
<text x="158.4" y="76.9" font-size="10" letter-spacing="-0.25">297.0 mm</text>
<text x="158.4" y="90.6" font-size="10" letter-spacing="-0.25">150.0 mm</text>
<text x="357.5" y="84" font-size="10.5" letter-spacing="-0.4">单位:</text>
<text x="384" y="84" font-size="10.5">毫米</text>
<text x="492" y="84" font-size="10" letter-spacing="-0.25">.2 mm</text>
<text x="582.9" y="76.9" font-size="10" letter-spacing="-0.25">5.0 mm</text>
<text x="582.9" y="90.6" font-size="10" letter-spacing="-0.25">5.0 mm</text>
</svg>
<!-- drawing -->
<svg width="1132" height="776">
<defs>
<clipPath id="ell"><path d="M914.60 499.00 L914.59 501.65 L914.58 504.05 L914.55 506.36 L914.51 508.61 L914.46 510.83 L914.40 513.02 L914.32 515.18 L914.24 517.31 L914.14 519.43 L914.04 521.53 L913.92 523.61 L913.79 525.68 L913.65 527.73 L913.49 529.77 L913.33 531.80 L913.16 533.81 L912.97 535.82 L912.77 537.81 L912.56 539.80 L912.34 541.77 L912.11 543.74 L911.87 545.69 L911.62 547.64 L911.36 549.57 L911.08 551.50 L910.79 553.42 L910.50 555.33 L910.19 557.23 L909.87 559.12 L909.54 561.00 L909.20 562.88 L908.84 564.74 L908.48 566.60 L908.11 568.45 L907.72 570.29 L907.33 572.12 L906.92 573.94 L906.50 575.75 L906.07 577.56 L905.63 579.36 L905.18 581.14 L904.72 582.92 L904.25 584.69 L903.77 586.45 L903.28 588.21 L902.77 589.95 L902.26 591.69 L901.73 593.41 L901.20 595.13 L900.65 596.84 L900.10 598.54 L899.53 600.22 L898.95 601.90 L898.36 603.58 L897.77 605.24 L897.16 606.89 L896.54 608.53 L895.91 610.16 L895.27 611.79 L894.62 613.40 L893.97 615.00 L893.30 616.60 L892.62 618.18 L891.93 619.76 L891.23 621.32 L890.52 622.87 L889.80 624.42 L889.07 625.95 L888.33 627.47 L887.59 628.98 L886.83 630.49 L886.06 631.98 L885.28 633.46 L884.50 634.93 L883.70 636.39 L882.89 637.83 L882.08 639.27 L881.25 640.70 L880.42 642.11 L879.58 643.52 L878.72 644.91 L877.86 646.29 L876.99 647.66 L876.11 649.02 L875.22 650.36 L874.33 651.70 L873.42 653.02 L872.50 654.33 L871.58 655.63 L870.64 656.92 L869.70 658.20 L868.75 659.46 L867.79 660.71 L866.82 661.95 L865.85 663.18 L864.86 664.40 L863.87 665.60 L862.86 666.79 L861.85 667.97 L860.84 669.13 L859.81 670.28 L858.77 671.42 L857.73 672.55 L856.68 673.67 L855.62 674.77 L854.55 675.86 L853.48 676.93 L852.39 677.99 L851.30 679.04 L850.20 680.08 L849.10 681.10 L847.98 682.11 L846.86 683.11 L845.73 684.09 L844.60 685.06 L843.45 686.01 L842.30 686.95 L841.14 687.88 L839.97 688.80 L838.80 689.70 L837.62 690.58 L836.43 691.46 L835.24 692.32 L834.04 693.16 L832.83 693.99 L831.61 694.81 L830.39 695.61 L829.16 696.40 L827.93 697.18 L826.68 697.94 L825.43 698.68 L824.18 699.41 L822.91 700.13 L821.64 700.83 L820.37 701.52 L819.09 702.20 L817.80 702.85 L816.50 703.50 L815.20 704.13 L813.89 704.74 L812.58 705.34 L811.26 705.93 L809.93 706.50 L808.60 707.06 L807.26 707.60 L805.91 708.13 L804.56 708.64 L803.20 709.13 L801.84 709.62 L800.46 710.08 L799.09 710.53 L797.70 710.97 L796.31 711.39 L794.92 711.80 L793.51 712.19 L792.10 712.57 L790.69 712.93 L789.26 713.27 L787.83 713.60 L786.40 713.92 L784.95 714.22 L783.50 714.50 L782.04 714.77 L780.57 715.03 L779.10 715.26 L777.61 715.49 L776.12 715.70 L774.62 715.89 L773.10 716.07 L771.58 716.23 L770.05 716.37 L768.50 716.51 L766.93 716.62 L765.36 716.72 L763.76 716.81 L762.13 716.88 L760.48 716.93 L758.79 716.97 L757.04 716.99 L755.10 717.00 L753.16 716.99 L751.41 716.97 L749.72 716.93 L748.07 716.88 L746.44 716.81 L744.84 716.72 L743.27 716.62 L741.70 716.51 L740.15 716.37 L738.62 716.23 L737.10 716.07 L735.58 715.89 L734.08 715.70 L732.59 715.49 L731.10 715.26 L729.63 715.03 L728.16 714.77 L726.70 714.50 L725.25 714.22 L723.80 713.92 L722.37 713.60 L720.94 713.27 L719.51 712.93 L718.10 712.57 L716.69 712.19 L715.28 711.80 L713.89 711.39 L712.50 710.97 L711.11 710.53 L709.74 710.08 L708.36 709.62 L707.00 709.13 L705.64 708.64 L704.29 708.13 L702.94 707.60 L701.60 707.06 L700.27 706.50 L698.94 705.93 L697.62 705.34 L696.31 704.74 L695.00 704.13 L693.70 703.50 L692.40 702.85 L691.11 702.20 L689.83 701.52 L688.56 700.83 L687.29 700.13 L686.02 699.41 L684.77 698.68 L683.52 697.94 L682.27 697.18 L681.04 696.40 L679.81 695.61 L678.59 694.81 L677.37 693.99 L676.16 693.16 L674.96 692.32 L673.77 691.46 L672.58 690.58 L671.40 689.70 L670.23 688.80 L669.06 687.88 L667.90 686.95 L666.75 686.01 L665.60 685.06 L664.47 684.09 L663.34 683.11 L662.22 682.11 L661.10 681.10 L660.00 680.08 L658.90 679.04 L657.81 677.99 L656.72 676.93 L655.65 675.86 L654.58 674.77 L653.52 673.67 L652.47 672.55 L651.43 671.42 L650.39 670.28 L649.36 669.13 L648.35 667.97 L647.34 666.79 L646.33 665.60 L645.34 664.40 L644.35 663.18 L643.38 661.95 L642.41 660.71 L641.45 659.46 L640.50 658.20 L639.56 656.92 L638.62 655.63 L637.70 654.33 L636.78 653.02 L635.87 651.70 L634.98 650.36 L634.09 649.02 L633.21 647.66 L632.34 646.29 L631.48 644.91 L630.62 643.52 L629.78 642.11 L628.95 640.70 L628.12 639.27 L627.31 637.83 L626.50 636.39 L625.70 634.93 L624.92 633.46 L624.14 631.98 L623.37 630.49 L622.61 628.98 L621.87 627.47 L621.13 625.95 L620.40 624.42 L619.68 622.87 L618.97 621.32 L618.27 619.76 L617.58 618.18 L616.90 616.60 L616.23 615.00 L615.58 613.40 L614.93 611.79 L614.29 610.16 L613.66 608.53 L613.04 606.89 L612.43 605.24 L611.84 603.58 L611.25 601.90 L610.67 600.22 L610.10 598.54 L609.55 596.84 L609.00 595.13 L608.47 593.41 L607.94 591.69 L607.43 589.95 L606.92 588.21 L606.43 586.45 L605.95 584.69 L605.48 582.92 L605.02 581.14 L604.57 579.36 L604.13 577.56 L603.70 575.75 L603.28 573.94 L602.87 572.12 L602.48 570.29 L602.09 568.45 L601.72 566.60 L601.36 564.74 L601.00 562.88 L600.66 561.00 L600.33 559.12 L600.01 557.23 L599.70 555.33 L599.41 553.42 L599.12 551.50 L598.84 549.57 L598.58 547.64 L598.33 545.69 L598.09 543.74 L597.86 541.77 L597.64 539.80 L597.43 537.81 L597.23 535.82 L597.04 533.81 L596.87 531.80 L596.71 529.77 L596.55 527.73 L596.41 525.68 L596.28 523.61 L596.16 521.53 L596.06 519.43 L595.96 517.31 L595.88 515.18 L595.80 513.02 L595.74 510.83 L595.69 508.61 L595.65 506.36 L595.62 504.05 L595.61 501.65 L595.60 499.00 L595.61 496.35 L595.62 493.95 L595.65 491.64 L595.69 489.39 L595.74 487.17 L595.80 484.98 L595.88 482.82 L595.96 480.69 L596.06 478.57 L596.16 476.47 L596.28 474.39 L596.41 472.32 L596.55 470.27 L596.71 468.23 L596.87 466.20 L597.04 464.19 L597.23 462.18 L597.43 460.19 L597.64 458.20 L597.86 456.23 L598.09 454.26 L598.33 452.31 L598.58 450.36 L598.84 448.43 L599.12 446.50 L599.41 444.58 L599.70 442.67 L600.01 440.77 L600.33 438.88 L600.66 437.00 L601.00 435.12 L601.36 433.26 L601.72 431.40 L602.09 429.55 L602.48 427.71 L602.87 425.88 L603.28 424.06 L603.70 422.25 L604.13 420.44 L604.57 418.64 L605.02 416.86 L605.48 415.08 L605.95 413.31 L606.43 411.55 L606.92 409.79 L607.43 408.05 L607.94 406.31 L608.47 404.59 L609.00 402.87 L609.55 401.16 L610.10 399.46 L610.67 397.78 L611.25 396.10 L611.84 394.42 L612.43 392.76 L613.04 391.11 L613.66 389.47 L614.29 387.84 L614.93 386.21 L615.58 384.60 L616.23 383.00 L616.90 381.40 L617.58 379.82 L618.27 378.24 L618.97 376.68 L619.68 375.13 L620.40 373.58 L621.13 372.05 L621.87 370.53 L622.61 369.02 L623.37 367.51 L624.14 366.02 L624.92 364.54 L625.70 363.07 L626.50 361.61 L627.31 360.17 L628.12 358.73 L628.95 357.30 L629.78 355.89 L630.62 354.48 L631.48 353.09 L632.34 351.71 L633.21 350.34 L634.09 348.98 L634.98 347.64 L635.87 346.30 L636.78 344.98 L637.70 343.67 L638.62 342.37 L639.56 341.08 L640.50 339.80 L641.45 338.54 L642.41 337.29 L643.38 336.05 L644.35 334.82 L645.34 333.60 L646.33 332.40 L647.34 331.21 L648.35 330.03 L649.36 328.87 L650.39 327.72 L651.43 326.58 L652.47 325.45 L653.52 324.33 L654.58 323.23 L655.65 322.14 L656.72 321.07 L657.81 320.01 L658.90 318.96 L660.00 317.92 L661.10 316.90 L662.22 315.89 L663.34 314.89 L664.47 313.91 L665.60 312.94 L666.75 311.99 L667.90 311.05 L669.06 310.12 L670.23 309.20 L671.40 308.30 L672.58 307.42 L673.77 306.54 L674.96 305.68 L676.16 304.84 L677.37 304.01 L678.59 303.19 L679.81 302.39 L681.04 301.60 L682.27 300.82 L683.52 300.06 L684.77 299.32 L686.02 298.59 L687.29 297.87 L688.56 297.17 L689.83 296.48 L691.11 295.80 L692.40 295.15 L693.70 294.50 L695.00 293.87 L696.31 293.26 L697.62 292.66 L698.94 292.07 L700.27 291.50 L701.60 290.94 L702.94 290.40 L704.29 289.87 L705.64 289.36 L707.00 288.87 L708.36 288.38 L709.74 287.92 L711.11 287.47 L712.50 287.03 L713.89 286.61 L715.28 286.20 L716.69 285.81 L718.10 285.43 L719.51 285.07 L720.94 284.73 L722.37 284.40 L723.80 284.08 L725.25 283.78 L726.70 283.50 L728.16 283.23 L729.63 282.97 L731.10 282.74 L732.59 282.51 L734.08 282.30 L735.58 282.11 L737.10 281.93 L738.62 281.77 L740.15 281.63 L741.70 281.49 L743.27 281.38 L744.84 281.28 L746.44 281.19 L748.07 281.12 L749.72 281.07 L751.41 281.03 L753.16 281.01 L755.10 281.00 L757.04 281.01 L758.79 281.03 L760.48 281.07 L762.13 281.12 L763.76 281.19 L765.36 281.28 L766.93 281.38 L768.50 281.49 L770.05 281.63 L771.58 281.77 L773.10 281.93 L774.62 282.11 L776.12 282.30 L777.61 282.51 L779.10 282.74 L780.57 282.97 L782.04 283.23 L783.50 283.50 L784.95 283.78 L786.40 284.08 L787.83 284.40 L789.26 284.73 L790.69 285.07 L792.10 285.43 L793.51 285.81 L794.92 286.20 L796.31 286.61 L797.70 287.03 L799.09 287.47 L800.46 287.92 L801.84 288.38 L803.20 288.87 L804.56 289.36 L805.91 289.87 L807.26 290.40 L808.60 290.94 L809.93 291.50 L811.26 292.07 L812.58 292.66 L813.89 293.26 L815.20 293.87 L816.50 294.50 L817.80 295.15 L819.09 295.80 L820.37 296.48 L821.64 297.17 L822.91 297.87 L824.18 298.59 L825.43 299.32 L826.68 300.06 L827.93 300.82 L829.16 301.60 L830.39 302.39 L831.61 303.19 L832.83 304.01 L834.04 304.84 L835.24 305.68 L836.43 306.54 L837.62 307.42 L838.80 308.30 L839.97 309.20 L841.14 310.12 L842.30 311.05 L843.45 311.99 L844.60 312.94 L845.73 313.91 L846.86 314.89 L847.98 315.89 L849.10 316.90 L850.20 317.92 L851.30 318.96 L852.39 320.01 L853.48 321.07 L854.55 322.14 L855.62 323.23 L856.68 324.33 L857.73 325.45 L858.77 326.58 L859.81 327.72 L860.84 328.87 L861.85 330.03 L862.86 331.21 L863.87 332.40 L864.86 333.60 L865.85 334.82 L866.82 336.05 L867.79 337.29 L868.75 338.54 L869.70 339.80 L870.64 341.08 L871.58 342.37 L872.50 343.67 L873.42 344.98 L874.33 346.30 L875.22 347.64 L876.11 348.98 L876.99 350.34 L877.86 351.71 L878.72 353.09 L879.58 354.48 L880.42 355.89 L881.25 357.30 L882.08 358.73 L882.89 360.17 L883.70 361.61 L884.50 363.07 L885.28 364.54 L886.06 366.02 L886.83 367.51 L887.59 369.02 L888.33 370.53 L889.07 372.05 L889.80 373.58 L890.52 375.13 L891.23 376.68 L891.93 378.24 L892.62 379.82 L893.30 381.40 L893.97 383.00 L894.62 384.60 L895.27 386.21 L895.91 387.84 L896.54 389.47 L897.16 391.11 L897.77 392.76 L898.36 394.42 L898.95 396.10 L899.53 397.78 L900.10 399.46 L900.65 401.16 L901.20 402.87 L901.73 404.59 L902.26 406.31 L902.77 408.05 L903.28 409.79 L903.77 411.55 L904.25 413.31 L904.72 415.08 L905.18 416.86 L905.63 418.64 L906.07 420.44 L906.50 422.25 L906.92 424.06 L907.33 425.88 L907.72 427.71 L908.11 429.55 L908.48 431.40 L908.84 433.26 L909.20 435.12 L909.54 437.00 L909.87 438.88 L910.19 440.77 L910.50 442.67 L910.79 444.58 L911.08 446.50 L911.36 448.43 L911.62 450.36 L911.87 452.31 L912.11 454.26 L912.34 456.23 L912.56 458.20 L912.77 460.19 L912.97 462.18 L913.16 464.19 L913.33 466.20 L913.49 468.23 L913.65 470.27 L913.79 472.32 L913.92 474.39 L914.04 476.47 L914.14 478.57 L914.24 480.69 L914.32 482.82 L914.40 484.98 L914.46 487.17 L914.51 489.39 L914.55 491.64 L914.58 493.95 L914.59 496.35Z"/></clipPath>
<filter id="rnd" x="0" y="0" width="1132" height="776" filterUnits="userSpaceOnUse">
 <feGaussianBlur in="SourceAlpha" stdDeviation="2.5" result="b"/>
 <feComponentTransfer in="b" result="t"><feFuncA type="linear" slope="8" intercept="-3.5"/></feComponentTransfer>
 <feFlood flood-color="#f8d100"/>
 <feComposite in2="t" operator="in"/>
</filter>
</defs>
<path fill="#f9d400" d="M622.1 397.9 620.6 396.7 618.8 396.0 616.9 395.7 615.0 395.9 613.2 396.6 611.7 397.7 610.5 399.1 609.6 400.9 609.6 401.1 609.5 401.2 609.0 402.8 609.0 402.9 608.5 404.6 608.5 404.6 608.0 406.3 607.9 406.3 607.4 408.0 607.4 408.1 606.9 409.8 606.9 409.8 606.4 411.5 606.4 411.6 606.2 412.5 605.9 414.4 606.2 416.4 606.9 418.2 608.1 419.8 609.6 421.0 611.5 421.7 613.4 422.0 615.3 421.7 617.2 421.0 618.7 419.8 625.1 413.4 625.6 412.9 625.9 412.4 626.7 411.2 626.8 411.1 627.4 409.7 627.4 409.5 627.7 408.1 627.7 407.9 627.7 406.4 627.7 406.2 627.4 404.8 627.4 404.6 626.8 403.2 626.7 403.1 625.9 401.9 625.6 401.4 625.1 400.9ZM618.9 376.9 618.4 378.6 618.3 380.4 618.6 382.2 619.3 383.8 620.4 385.2 630.6 395.4 631.1 395.9 631.6 396.2 632.8 397.0 633.0 397.1 634.3 397.7 634.5 397.8 636.0 398.0 636.1 398.1 637.6 398.1 637.8 398.0 639.2 397.8 639.4 397.7 640.8 397.1 640.9 397.0 642.2 396.2 642.6 395.9 643.1 395.4 662.9 375.6 663.4 375.1 663.8 374.6 664.6 373.4 664.7 373.2 665.2 371.9 665.3 371.7 665.6 370.3 665.6 370.1 665.6 368.6 665.6 368.4 665.3 367.0 665.2 366.8 664.7 365.4 664.6 365.3 663.8 364.0 663.4 363.6 662.9 363.1 646.5 346.6 645.0 345.4 643.2 344.7 641.3 344.4 639.5 344.6 637.7 345.3 636.1 346.3 634.9 347.8 634.1 349.0 634.1 349.0 633.2 350.3 633.2 350.4 632.4 351.7 632.3 351.7 631.5 353.1 631.5 353.1 630.6 354.5 630.6 354.5 629.8 355.9 629.8 355.9 629.0 357.3 628.9 357.3 628.1 358.7 628.1 358.8 627.3 360.1 627.3 360.2 626.5 361.6 626.5 361.6 625.7 363.0 625.7 363.1 624.9 364.5 624.9 364.6 624.2 366.0 624.1 366.0 623.4 367.5 623.4 367.5 622.6 369.0 622.6 369.0 621.9 370.5 621.9 370.6 621.1 372.0 621.1 372.1 620.4 373.6 620.4 373.6 619.7 375.1 619.7 375.2 619.0 376.7 619.0 376.7ZM667.9 311.0 667.3 311.6 651.2 327.7 650.7 328.3 650.3 328.7 649.5 329.9 649.4 330.1 648.8 331.5 648.8 331.6 648.5 333.1 648.5 333.3 648.5 334.7 648.5 334.9 648.8 336.4 648.8 336.5 649.4 337.9 649.5 338.1 650.3 339.3 650.7 339.7 651.2 340.3 668.5 357.6 669.0 358.1 669.4 358.4 670.7 359.2 670.8 359.3 672.2 359.9 672.4 359.9 673.8 360.2 674.0 360.2 675.5 360.2 675.6 360.2 677.1 359.9 677.3 359.9 678.6 359.3 678.8 359.2 680.0 358.4 680.5 358.1 681.0 357.6 700.8 337.8 701.3 337.3 701.6 336.8 702.4 335.6 702.5 335.4 703.1 334.1 703.1 333.9 703.4 332.4 703.4 332.3 703.4 330.8 703.4 330.6 703.1 329.2 703.1 329.0 702.5 327.6 702.4 327.5 701.6 326.2 701.3 325.8 700.8 325.3 683.5 308.0 682.9 307.5 682.5 307.1 680.8 306.1 678.9 305.5 677.0 305.5 675.0 305.9 673.3 306.9 672.6 307.4 672.5 307.4 671.4 308.3 671.4 308.3 670.3 309.2 670.2 309.2 669.1 310.1 669.0 310.1ZM694.7 294.0 693.0 295.2 691.6 296.7 690.8 298.5 690.4 300.5 690.7 302.6 691.4 304.5 692.6 306.1 706.3 319.8 706.9 320.3 707.3 320.6 708.5 321.4 708.7 321.5 710.0 322.1 710.2 322.1 711.7 322.4 711.8 322.4 713.3 322.4 713.5 322.4 714.9 322.1 715.1 322.1 716.5 321.5 716.6 321.4 717.9 320.6 718.3 320.3 718.8 319.8 738.6 300.0 739.1 299.4 739.5 299.0 740.3 297.8 740.4 297.6 740.9 296.3 741.0 296.1 741.3 294.6 741.3 294.5 741.3 293.0 741.3 292.8 741.0 291.4 740.9 291.2 740.4 289.8 740.3 289.6 739.5 288.4 739.1 288.0 738.6 287.4 736.2 285.1 734.8 284.0 733.2 283.2 731.5 282.9 729.7 283.0 729.7 283.0 729.6 283.0 728.2 283.2 728.1 283.2 726.7 283.5 726.7 283.5 725.3 283.8 725.2 283.8 723.8 284.1 723.8 284.1 722.4 284.4 722.3 284.4 721.0 284.7 720.9 284.7 719.6 285.1 719.5 285.1 718.1 285.4 718.1 285.4 716.7 285.8 716.6 285.8 715.3 286.2 715.2 286.2 713.9 286.6 713.8 286.6 712.5 287.0 712.5 287.0 711.2 287.5 711.1 287.5 709.8 287.9 709.7 287.9 708.4 288.4 708.3 288.4 707.0 288.9 707.0 288.9 705.7 289.3 705.6 289.4 704.3 289.9 704.3 289.9 703.0 290.4 702.9 290.4 701.6 290.9 701.6 291.0 700.3 291.5 700.2 291.5 699.0 292.1 698.9 292.1 697.7 292.6 697.6 292.7 696.3 293.2 696.3 293.3 695.0 293.9 695.0 293.9ZM609.7 461.3 608.2 460.1 606.4 459.4 604.6 459.1 602.7 459.2 600.9 459.9 599.4 461.0 598.1 462.4 597.3 464.1 596.9 465.9 596.9 466.2 596.9 466.2 596.7 468.2 596.7 468.3 596.6 470.2 596.6 470.3 596.4 472.3 596.4 472.3 596.3 474.4 596.3 474.4 596.2 476.5 596.2 476.5 596.1 478.6 596.1 478.6 596.0 480.7 596.0 480.7 595.9 482.8 595.9 482.8 595.8 485.0 595.8 485.0 595.7 487.1 595.7 487.2 595.7 489.4 595.7 489.4 595.7 491.6 595.7 491.7 595.6 493.9 595.6 494.0 595.6 495.4 595.9 497.4 596.6 499.2 597.8 500.8 599.3 502.0 601.1 502.7 603.1 503.0 605.0 502.7 606.9 502.0 608.4 500.8 622.5 486.7 623.0 486.1 623.4 485.7 624.2 484.5 624.3 484.3 624.8 482.9 624.9 482.8 625.2 481.3 625.2 481.1 625.2 479.7 625.2 479.5 624.9 478.0 624.8 477.8 624.3 476.5 624.2 476.3 623.4 475.1 623.0 474.7 622.5 474.1ZM643.1 419.0 642.5 418.5 642.1 418.2 640.9 417.3 640.7 417.3 639.4 416.7 639.2 416.6 637.7 416.4 637.5 416.3 636.1 416.3 635.9 416.4 634.4 416.6 634.3 416.7 632.9 417.3 632.7 417.3 631.5 418.2 631.1 418.5 630.5 419.0 610.8 438.8 610.3 439.3 609.9 439.8 609.1 441.0 609.0 441.2 608.5 442.5 608.4 442.7 608.1 444.1 608.1 444.3 608.1 445.8 608.1 446.0 608.4 447.4 608.5 447.6 609.0 449.0 609.1 449.1 609.9 450.3 610.3 450.8 610.8 451.3 628.1 468.6 628.6 469.1 629.0 469.5 630.3 470.3 630.4 470.4 631.8 470.9 632.0 471.0 633.4 471.3 633.6 471.3 635.1 471.3 635.3 471.3 636.7 471.0 636.9 470.9 638.2 470.4 638.4 470.3 639.6 469.5 640.1 469.1 640.6 468.6 660.4 448.9 660.9 448.3 661.2 447.9 662.0 446.7 662.1 446.5 662.7 445.1 662.8 444.9 663.0 443.5 663.1 443.3 663.1 441.8 663.0 441.7 662.8 440.2 662.7 440.0 662.1 438.7 662.0 438.5 661.2 437.3 660.9 436.9 660.4 436.3ZM680.9 381.2 680.4 380.7 680.0 380.4 678.7 379.5 678.6 379.4 677.2 378.9 677.0 378.8 675.6 378.5 675.4 378.5 673.9 378.5 673.7 378.5 672.3 378.8 672.1 378.9 670.8 379.4 670.6 379.5 669.4 380.4 668.9 380.7 668.4 381.2 648.6 401.0 648.1 401.5 647.8 402.0 647.0 403.2 646.9 403.3 646.3 404.7 646.3 404.9 646.0 406.3 645.9 406.5 645.9 408.0 646.0 408.2 646.3 409.6 646.3 409.8 646.9 411.1 647.0 411.3 647.8 412.5 648.1 413.0 648.6 413.5 665.9 430.8 666.5 431.3 666.9 431.7 668.1 432.5 668.3 432.6 669.6 433.1 669.8 433.2 671.3 433.5 671.5 433.5 672.9 433.5 673.1 433.5 674.6 433.2 674.7 433.1 676.1 432.6 676.3 432.5 677.5 431.7 677.9 431.3 678.5 430.8 698.2 411.0 698.7 410.5 699.1 410.1 699.9 408.8 700.0 408.7 700.6 407.3 700.6 407.1 700.9 405.7 700.9 405.5 700.9 404.0 700.9 403.8 700.6 402.4 700.6 402.2 700.0 400.9 699.9 400.7 699.1 399.5 698.7 399.0 698.2 398.5ZM718.8 343.4 718.2 342.9 717.8 342.5 716.6 341.7 716.4 341.6 715.1 341.1 714.9 341.0 713.4 340.7 713.3 340.7 711.8 340.7 711.6 340.7 710.2 341.0 710.0 341.1 708.6 341.6 708.4 341.7 707.2 342.5 706.8 342.9 706.2 343.4 686.5 363.2 686.0 363.7 685.6 364.1 684.8 365.4 684.7 365.5 684.2 366.9 684.1 367.1 683.8 368.5 683.8 368.7 683.8 370.2 683.8 370.4 684.1 371.8 684.2 372.0 684.7 373.3 684.8 373.5 685.6 374.7 686.0 375.2 686.5 375.7 703.8 393.0 704.3 393.5 704.8 393.9 706.0 394.7 706.1 394.8 707.5 395.3 707.7 395.4 709.1 395.7 709.3 395.7 710.8 395.7 711.0 395.7 712.4 395.4 712.6 395.3 713.9 394.8 714.1 394.7 715.3 393.9 715.8 393.5 716.3 393.0 736.1 373.2 736.6 372.7 736.9 372.3 737.8 371.0 737.8 370.9 738.4 369.5 738.5 369.3 738.7 367.9 738.8 367.7 738.8 366.2 738.7 366.0 738.5 364.6 738.4 364.4 737.8 363.1 737.8 362.9 736.9 361.7 736.6 361.2 736.1 360.7ZM756.6 305.6 756.1 305.1 755.7 304.7 754.4 303.9 754.3 303.8 752.9 303.3 752.7 303.2 751.3 302.9 751.1 302.9 749.6 302.9 749.4 302.9 748.0 303.2 747.8 303.3 746.5 303.8 746.3 303.9 745.1 304.7 744.6 305.1 744.1 305.6 724.3 325.4 723.8 325.9 723.5 326.3 722.7 327.6 722.6 327.7 722.0 329.1 722.0 329.3 721.7 330.7 721.6 330.9 721.6 332.4 721.7 332.5 722.0 334.0 722.0 334.2 722.6 335.5 722.7 335.7 723.5 336.9 723.8 337.4 724.3 337.9 741.6 355.2 742.2 355.7 742.6 356.0 743.8 356.9 744.0 356.9 745.3 357.5 745.5 357.6 747.0 357.9 747.2 357.9 748.6 357.9 748.8 357.9 750.3 357.6 750.4 357.5 751.8 356.9 752.0 356.9 753.2 356.0 753.6 355.7 754.2 355.2 773.9 335.4 774.4 334.9 774.8 334.4 775.6 333.2 775.7 333.1 776.3 331.7 776.3 331.5 776.6 330.1 776.6 329.9 776.6 328.4 776.6 328.2 776.3 326.8 776.3 326.6 775.7 325.2 775.6 325.1 774.8 323.9 774.4 323.4 773.9 322.9ZM762.2 287.5 761.7 288.1 761.3 288.5 760.5 289.7 760.4 289.9 759.9 291.3 759.8 291.5 759.5 292.9 759.5 293.1 759.5 294.6 759.5 294.7 759.8 296.2 759.9 296.4 760.4 297.7 760.5 297.9 761.3 299.1 761.7 299.5 762.2 300.1 779.5 317.4 780.0 317.9 780.5 318.2 781.7 319.1 781.8 319.1 783.2 319.7 783.4 319.8 784.8 320.0 785.0 320.1 786.5 320.1 786.7 320.0 788.1 319.8 788.3 319.7 789.7 319.1 789.8 319.1 791.0 318.2 791.5 317.9 792.0 317.4 807.6 301.8 808.7 300.3 809.5 298.6 809.8 296.8 809.6 294.9 809.0 293.2 808.0 291.6 806.6 290.4 804.9 289.5 804.6 289.4 804.5 289.3 803.2 288.9 803.2 288.9 801.9 288.4 801.8 288.4 800.5 287.9 800.4 287.9 799.1 287.5 799.0 287.5 797.7 287.0 797.7 287.0 796.4 286.6 796.3 286.6 795.0 286.2 794.9 286.2 793.6 285.8 793.5 285.8 792.1 285.4 792.1 285.4 790.7 285.1 790.6 285.1 789.3 284.7 789.2 284.7 787.9 284.4 787.8 284.4 786.4 284.1 786.4 284.1 785.0 283.8 784.9 283.8 783.5 283.5 783.5 283.5 782.1 283.2 782.0 283.2 780.6 283.0 780.5 283.0 779.1 282.7 779.1 282.7 777.7 282.5 777.6 282.5 776.2 282.3 776.1 282.3 774.7 282.1 774.6 282.1 773.1 281.9 773.1 281.9 771.9 281.8 769.6 281.9 767.6 282.6 765.8 284.0ZM610.9 538.3 609.3 537.1 607.4 536.3 605.3 536.1 603.3 536.5 601.4 537.4 599.9 538.7 598.8 540.5 598.2 542.5 598.2 544.5 598.3 545.7 598.3 545.7 598.6 547.6 598.6 547.7 598.8 549.6 598.8 549.6 599.1 551.5 599.1 551.5 599.4 553.4 599.4 553.4 599.7 555.3 599.7 555.4 600.0 557.2 600.0 557.3 600.3 559.1 600.3 559.1 600.7 561.0 600.7 561.0 600.9 562.4 601.5 564.3 602.7 566.0 604.2 567.3 606.1 568.2 608.1 568.5 610.1 568.3 612.0 567.5 613.6 566.3 620.0 559.9 620.5 559.4 620.8 558.9 621.7 557.7 621.8 557.5 622.3 556.2 622.4 556.0 622.7 554.6 622.7 554.4 622.7 552.9 622.7 552.7 622.4 551.3 622.3 551.1 621.8 549.7 621.7 549.6 620.8 548.3 620.5 547.9 620.0 547.4ZM640.6 492.3 640.0 491.8 639.6 491.4 638.4 490.6 638.2 490.5 636.8 489.9 636.6 489.9 635.2 489.6 635.0 489.6 633.5 489.6 633.4 489.6 631.9 489.9 631.7 489.9 630.4 490.5 630.2 490.6 629.0 491.4 628.6 491.8 628.0 492.3 608.2 512.0 607.7 512.6 607.4 513.0 606.6 514.2 606.5 514.4 605.9 515.8 605.9 515.9 605.6 517.4 605.6 517.6 605.6 519.0 605.6 519.2 605.9 520.7 605.9 520.8 606.5 522.2 606.6 522.4 607.4 523.6 607.7 524.0 608.2 524.6 625.5 541.9 626.1 542.4 626.5 542.7 627.7 543.5 627.9 543.6 629.3 544.2 629.4 544.2 630.9 544.5 631.1 544.5 632.5 544.5 632.7 544.5 634.2 544.2 634.4 544.2 635.7 543.6 635.9 543.5 637.1 542.7 637.5 542.4 638.1 541.9 657.8 522.1 658.3 521.6 658.7 521.1 659.5 519.9 659.6 519.7 660.2 518.4 660.2 518.2 660.5 516.7 660.5 516.6 660.5 515.1 660.5 514.9 660.2 513.5 660.2 513.3 659.6 511.9 659.5 511.8 658.7 510.5 658.3 510.1 657.8 509.6ZM678.4 454.4 677.9 454.0 677.4 453.6 676.2 452.8 676.0 452.7 674.7 452.1 674.5 452.1 673.1 451.8 672.9 451.8 671.4 451.8 671.2 451.8 669.8 452.1 669.6 452.1 668.2 452.7 668.1 452.8 666.8 453.6 666.4 454.0 665.9 454.4 646.1 474.2 645.6 474.8 645.2 475.2 644.4 476.4 644.3 476.6 643.8 477.9 643.7 478.1 643.4 479.6 643.4 479.8 643.4 481.2 643.4 481.4 643.7 482.9 643.8 483.0 644.3 484.4 644.4 484.6 645.2 485.8 645.6 486.2 646.1 486.8 663.4 504.1 663.9 504.6 664.4 504.9 665.6 505.7 665.8 505.8 667.1 506.4 667.3 506.4 668.7 506.7 668.9 506.7 670.4 506.7 670.6 506.7 672.0 506.4 672.2 506.4 673.6 505.8 673.7 505.7 674.9 504.9 675.4 504.6 675.9 504.1 695.7 484.3 696.2 483.7 696.5 483.3 697.4 482.1 697.5 481.9 698.0 480.6 698.1 480.4 698.4 478.9 698.4 478.7 698.4 477.3 698.4 477.1 698.1 475.6 698.0 475.5 697.5 474.1 697.4 473.9 696.5 472.7 696.2 472.3 695.7 471.7ZM716.3 416.6 715.7 416.1 715.3 415.8 714.1 415.0 713.9 414.9 712.5 414.3 712.3 414.3 710.9 414.0 710.7 414.0 709.2 414.0 709.1 414.0 707.6 414.3 707.4 414.3 706.1 414.9 705.9 415.0 704.7 415.8 704.3 416.1 703.7 416.6 683.9 436.4 683.4 437.0 683.1 437.4 682.3 438.6 682.2 438.8 681.6 440.1 681.6 440.3 681.3 441.8 681.3 441.9 681.3 443.4 681.3 443.6 681.6 445.0 681.6 445.2 682.2 446.6 682.3 446.8 683.1 448.0 683.4 448.4 683.9 449.0 701.2 466.2 701.8 466.7 702.2 467.1 703.4 467.9 703.6 468.0 705.0 468.6 705.1 468.6 706.6 468.9 706.8 468.9 708.2 468.9 708.4 468.9 709.9 468.6 710.1 468.6 711.4 468.0 711.6 467.9 712.8 467.1 713.2 466.7 713.8 466.2 733.6 446.5 734.0 445.9 734.4 445.5 735.2 444.3 735.3 444.1 735.9 442.8 735.9 442.6 736.2 441.1 736.2 440.9 736.2 439.5 736.2 439.3 735.9 437.8 735.9 437.7 735.3 436.3 735.2 436.1 734.4 434.9 734.0 434.5 733.6 433.9ZM754.1 378.8 753.6 378.3 753.1 378.0 751.9 377.2 751.7 377.1 750.4 376.5 750.2 376.5 748.8 376.2 748.6 376.1 747.1 376.1 746.9 376.2 745.5 376.5 745.3 376.5 743.9 377.1 743.8 377.2 742.5 378.0 742.1 378.3 741.6 378.8 721.8 398.6 721.3 399.1 720.9 399.6 720.1 400.8 720.0 401.0 719.5 402.3 719.4 402.5 719.1 403.9 719.1 404.1 719.1 405.6 719.1 405.8 719.4 407.2 719.5 407.4 720.0 408.8 720.1 408.9 720.9 410.2 721.3 410.6 721.8 411.1 739.1 428.4 739.6 428.9 740.1 429.3 741.3 430.1 741.5 430.2 742.8 430.8 743.0 430.8 744.4 431.1 744.6 431.1 746.1 431.1 746.3 431.1 747.7 430.8 747.9 430.8 749.3 430.2 749.4 430.1 750.7 429.3 751.1 428.9 751.6 428.4 771.4 408.7 771.9 408.1 772.3 407.7 773.1 406.5 773.2 406.3 773.7 404.9 773.8 404.8 774.1 403.3 774.1 403.1 774.1 401.7 774.1 401.5 773.8 400.0 773.7 399.8 773.2 398.5 773.1 398.3 772.3 397.1 771.9 396.7 771.4 396.1ZM792.0 341.0 791.4 340.5 791.0 340.2 789.8 339.3 789.6 339.3 788.2 338.7 788.1 338.6 786.6 338.4 786.4 338.3 785.0 338.3 784.8 338.4 783.3 338.6 783.1 338.7 781.8 339.3 781.6 339.3 780.4 340.2 780.0 340.5 779.4 341.0 759.6 360.8 759.1 361.3 758.8 361.8 758.0 363.0 757.9 363.2 757.3 364.5 757.3 364.7 757.0 366.1 757.0 366.3 757.0 367.8 757.0 368.0 757.3 369.4 757.3 369.6 757.9 371.0 758.0 371.1 758.8 372.4 759.1 372.8 759.6 373.3 776.9 390.6 777.5 391.1 777.9 391.5 779.1 392.3 779.3 392.4 780.7 392.9 780.8 393.0 782.3 393.3 782.5 393.3 783.9 393.3 784.1 393.3 785.6 393.0 785.8 392.9 787.1 392.4 787.3 392.3 788.5 391.5 788.9 391.1 789.5 390.6 809.3 370.9 809.8 370.3 810.1 369.9 810.9 368.7 811.0 368.5 811.6 367.1 811.6 366.9 811.9 365.5 811.9 365.3 811.9 363.8 811.9 363.7 811.6 362.2 811.6 362.0 811.0 360.7 810.9 360.5 810.1 359.3 809.8 358.9 809.3 358.3ZM829.8 303.2 829.3 302.7 828.8 302.4 827.6 301.5 827.4 301.5 826.1 300.9 825.9 300.8 824.5 300.5 824.3 300.5 822.8 300.5 822.6 300.5 821.2 300.8 821.0 300.9 819.6 301.5 819.5 301.5 818.2 302.4 817.8 302.7 817.3 303.2 797.5 323.0 797.0 323.5 796.6 324.0 795.8 325.2 795.7 325.3 795.2 326.7 795.1 326.9 794.8 328.3 794.8 328.5 794.8 330.0 794.8 330.2 795.1 331.6 795.2 331.8 795.7 333.2 795.8 333.3 796.6 334.5 797.0 335.0 797.5 335.5 814.8 352.8 815.3 353.3 815.8 353.7 817.0 354.5 817.2 354.6 818.5 355.1 818.7 355.2 820.1 355.5 820.3 355.5 821.8 355.5 822.0 355.5 823.4 355.2 823.6 355.1 825.0 354.6 825.1 354.5 826.4 353.7 826.8 353.3 827.3 352.8 847.1 333.0 847.6 332.5 848.0 332.1 848.8 330.8 848.9 330.7 849.4 329.3 849.5 329.1 849.8 327.7 849.8 327.5 849.8 326.0 849.8 325.9 849.5 324.4 849.4 324.2 848.9 322.9 848.8 322.7 848.0 321.5 847.6 321.0 847.1 320.5ZM609.1 581.8 607.9 583.4 607.2 585.3 606.9 587.3 607.2 589.2 607.4 589.9 607.4 590.0 607.9 591.7 608.0 591.7 608.5 593.4 608.5 593.4 609.0 595.1 609.0 595.2 609.5 596.8 609.6 596.9 610.1 598.5 610.1 598.6 610.7 600.2 610.7 600.3 611.2 601.9 611.3 601.9 611.5 602.5 612.2 604.1 613.2 605.4 623.0 615.1 623.5 615.6 624.0 616.0 625.2 616.8 625.4 616.9 626.7 617.4 626.9 617.5 628.3 617.8 628.5 617.8 630.0 617.8 630.2 617.8 631.6 617.5 631.8 617.4 633.2 616.9 633.3 616.8 634.6 616.0 635.0 615.6 635.5 615.1 655.3 595.3 655.8 594.8 656.2 594.4 657.0 593.1 657.1 593.0 657.6 591.6 657.7 591.4 658.0 590.0 658.0 589.8 658.0 588.3 658.0 588.1 657.7 586.7 657.6 586.5 657.1 585.2 657.0 585.0 656.2 583.8 655.8 583.3 655.3 582.8 638.0 565.5 637.5 565.0 637.0 564.7 635.8 563.8 635.6 563.7 634.3 563.2 634.1 563.1 632.7 562.8 632.5 562.8 631.0 562.8 630.8 562.8 629.4 563.1 629.2 563.2 627.8 563.7 627.7 563.8 626.5 564.7 626.0 565.0 625.5 565.5ZM675.9 527.7 675.3 527.2 674.9 526.8 673.7 526.0 673.5 525.9 672.1 525.4 672.0 525.3 670.5 525.0 670.3 525.0 668.9 525.0 668.7 525.0 667.2 525.3 667.1 525.4 665.7 525.9 665.5 526.0 664.3 526.8 663.9 527.2 663.3 527.7 643.6 547.5 643.1 548.0 642.7 548.4 641.9 549.7 641.8 549.8 641.2 551.2 641.2 551.4 640.9 552.8 640.9 553.0 640.9 554.5 640.9 554.7 641.2 556.1 641.2 556.3 641.8 557.6 641.9 557.8 642.7 559.0 643.1 559.5 643.6 560.0 660.9 577.3 661.4 577.8 661.8 578.2 663.1 579.0 663.2 579.1 664.6 579.6 664.8 579.7 666.2 580.0 666.4 580.0 667.9 580.0 668.0 580.0 669.5 579.7 669.7 579.6 671.0 579.1 671.2 579.0 672.4 578.2 672.8 577.8 673.4 577.3 693.2 557.5 693.7 557.0 694.0 556.6 694.8 555.3 694.9 555.2 695.5 553.8 695.5 553.6 695.8 552.2 695.8 552.0 695.8 550.5 695.8 550.3 695.5 548.9 695.5 548.7 694.9 547.4 694.8 547.2 694.0 546.0 693.7 545.5 693.2 545.0ZM713.7 489.9 713.2 489.4 712.7 489.0 711.5 488.2 711.4 488.1 710.0 487.6 709.8 487.5 708.4 487.2 708.2 487.2 706.7 487.2 706.5 487.2 705.1 487.5 704.9 487.6 703.5 488.1 703.4 488.2 702.2 489.0 701.7 489.4 701.2 489.9 681.4 509.7 680.9 510.2 680.6 510.6 679.7 511.9 679.6 512.0 679.1 513.4 679.0 513.6 678.7 515.0 678.7 515.2 678.7 516.7 678.7 516.8 679.0 518.3 679.1 518.5 679.6 519.8 679.7 520.0 680.6 521.2 680.9 521.6 681.4 522.2 698.7 539.5 699.2 540.0 699.7 540.3 700.9 541.2 701.1 541.2 702.4 541.8 702.6 541.9 704.1 542.2 704.2 542.2 705.7 542.2 705.9 542.2 707.3 541.9 707.5 541.8 708.9 541.2 709.0 541.2 710.3 540.3 710.7 540.0 711.2 539.5 731.0 519.7 731.5 519.2 731.9 518.7 732.7 517.5 732.8 517.4 733.3 516.0 733.4 515.8 733.7 514.4 733.7 514.2 733.7 512.7 733.7 512.5 733.4 511.1 733.3 510.9 732.8 509.5 732.7 509.4 731.9 508.2 731.5 507.7 731.0 507.2ZM751.6 452.1 751.0 451.6 750.6 451.2 749.4 450.4 749.2 450.3 747.8 449.8 747.7 449.7 746.2 449.4 746.0 449.4 744.6 449.4 744.4 449.4 742.9 449.7 742.8 449.8 741.4 450.3 741.2 450.4 740.0 451.2 739.6 451.6 739.0 452.1 719.3 471.8 718.8 472.4 718.4 472.8 717.6 474.0 717.5 474.2 716.9 475.6 716.9 475.7 716.6 477.2 716.6 477.4 716.6 478.8 716.6 479.0 716.9 480.5 716.9 480.7 717.5 482.0 717.6 482.2 718.4 483.4 718.8 483.8 719.3 484.4 736.6 501.7 737.1 502.2 737.5 502.5 738.8 503.3 738.9 503.4 740.3 504.0 740.5 504.1 741.9 504.3 742.1 504.4 743.6 504.4 743.7 504.3 745.2 504.1 745.4 504.0 746.7 503.4 746.9 503.3 748.1 502.5 748.6 502.2 749.1 501.7 768.9 481.9 769.4 481.4 769.7 480.9 770.5 479.7 770.6 479.5 771.2 478.2 771.2 478.0 771.5 476.6 771.5 476.4 771.5 474.9 771.5 474.7 771.2 473.3 771.2 473.1 770.6 471.7 770.5 471.6 769.7 470.3 769.4 469.9 768.9 469.4ZM789.4 414.3 788.9 413.8 788.4 413.4 787.2 412.6 787.1 412.5 785.7 411.9 785.5 411.9 784.1 411.6 783.9 411.6 782.4 411.6 782.2 411.6 780.8 411.9 780.6 411.9 779.2 412.5 779.1 412.6 777.9 413.4 777.4 413.8 776.9 414.3 757.1 434.0 756.6 434.6 756.3 435.0 755.4 436.2 755.4 436.4 754.8 437.8 754.7 437.9 754.4 439.4 754.4 439.6 754.4 441.0 754.4 441.2 754.7 442.7 754.8 442.8 755.4 444.2 755.4 444.4 756.3 445.6 756.6 446.0 757.1 446.6 774.4 463.9 775.0 464.4 775.4 464.7 776.6 465.5 776.8 465.6 778.1 466.2 778.3 466.2 779.8 466.5 779.9 466.6 781.4 466.6 781.6 466.5 783.0 466.2 783.2 466.2 784.6 465.6 784.7 465.5 786.0 464.7 786.4 464.4 786.9 463.9 806.7 444.1 807.2 443.6 807.6 443.1 808.4 441.9 808.5 441.7 809.0 440.4 809.1 440.2 809.4 438.8 809.4 438.6 809.4 437.1 809.4 436.9 809.1 435.5 809.0 435.3 808.5 433.9 808.4 433.8 807.6 432.5 807.2 432.1 806.7 431.6ZM827.3 376.4 826.7 376.0 826.3 375.6 825.1 374.8 824.9 374.7 823.6 374.1 823.4 374.1 821.9 373.8 821.7 373.8 820.3 373.8 820.1 373.8 818.6 374.1 818.5 374.1 817.1 374.7 816.9 374.8 815.7 375.6 815.3 376.0 814.7 376.4 795.0 396.2 794.5 396.8 794.1 397.2 793.3 398.4 793.2 398.6 792.6 399.9 792.6 400.1 792.3 401.6 792.3 401.8 792.3 403.2 792.3 403.4 792.6 404.9 792.6 405.0 793.2 406.4 793.3 406.6 794.1 407.8 794.5 408.2 795.0 408.8 812.3 426.1 812.8 426.6 813.2 426.9 814.5 427.7 814.6 427.8 816.0 428.4 816.2 428.4 817.6 428.7 817.8 428.7 819.3 428.7 819.5 428.7 820.9 428.4 821.1 428.4 822.4 427.8 822.6 427.7 823.8 426.9 824.3 426.6 824.8 426.1 844.6 406.3 845.1 405.7 845.4 405.3 846.2 404.1 846.3 403.9 846.9 402.6 846.9 402.4 847.2 400.9 847.3 400.8 847.3 399.3 847.2 399.1 846.9 397.7 846.9 397.5 846.3 396.1 846.2 395.9 845.4 394.7 845.1 394.3 844.6 393.7ZM865.1 338.6 864.6 338.1 864.1 337.8 862.9 337.0 862.8 336.9 861.4 336.3 861.2 336.3 859.8 336.0 859.6 336.0 858.1 336.0 857.9 336.0 856.5 336.3 856.3 336.3 855.0 336.9 854.8 337.0 853.6 337.8 853.1 338.1 852.6 338.6 832.8 358.4 832.3 359.0 832.0 359.4 831.1 360.6 831.1 360.8 830.5 362.1 830.4 362.3 830.2 363.8 830.1 363.9 830.1 365.4 830.2 365.6 830.4 367.0 830.5 367.2 831.1 368.6 831.1 368.8 832.0 370.0 832.3 370.4 832.8 371.0 850.1 388.3 850.7 388.7 851.1 389.1 852.3 389.9 852.5 390.0 853.8 390.6 854.0 390.6 855.5 390.9 855.6 390.9 857.1 390.9 857.3 390.9 858.7 390.6 858.9 390.6 860.3 390.0 860.5 389.9 861.7 389.1 862.1 388.7 862.7 388.3 881.7 369.2 882.9 367.7 883.6 365.9 883.9 364.0 883.7 362.1 882.9 360.3 882.9 360.2 882.9 360.1 882.1 358.8 882.1 358.7 881.3 357.3 881.2 357.3 880.4 355.9 880.4 355.9 879.6 354.5 879.6 354.5 878.7 353.1 878.7 353.1 877.9 351.7 877.8 351.7 877.7 351.5 876.7 350.2ZM631.4 636.3 630.8 636.2 630.1 636.3 629.5 636.5 629.0 636.9 628.5 637.4 628.3 638.0 628.2 638.7 628.3 639.4 628.5 640.0 628.9 640.7 629.0 640.7 629.8 642.1 629.8 642.1 630.6 643.5 630.6 643.5 631.5 644.9 631.5 644.9 632.3 646.3 632.3 646.3 633.2 647.6 633.2 647.7 634.1 649.0 634.1 649.0 635.0 650.4 635.0 650.4 635.9 651.7 635.9 651.7 636.8 653.0 636.8 653.0 637.7 654.3 637.7 654.3 638.6 655.6 638.6 655.6 639.5 656.9 639.6 656.9 640.5 658.2 640.5 658.2 641.4 659.5 641.5 659.5 642.4 660.7 642.4 660.7 643.4 661.9 643.4 662.0 644.3 663.2 644.4 663.2 645.3 664.4 645.3 664.4 646.3 665.6 646.3 665.6 647.3 666.8 647.3 666.8 648.3 668.0 648.4 668.0 648.9 668.6 649.5 669.1 650.1 669.4 650.7 669.5 651.4 669.4 652.0 669.2 652.6 668.8 653.0 668.4 653.1 668.2 653.9 667.2 654.2 666.8 654.8 665.8 655.0 665.3 655.3 664.2 655.4 663.7 655.5 662.6 655.5 662.1 655.4 660.9 655.3 660.4 655.0 659.3 654.8 658.8 654.2 657.8 653.9 657.4 653.1 656.4 653.0 656.2 635.3 638.6 635.1 638.4 634.1 637.6 633.7 637.3 632.7 636.8 632.2 636.6ZM673.3 600.9 672.8 600.4 672.4 600.1 671.1 599.3 671.0 599.2 669.6 598.6 669.4 598.6 668.0 598.3 667.8 598.3 666.3 598.3 666.1 598.3 664.7 598.6 664.5 598.6 663.2 599.2 663.0 599.3 661.8 600.1 661.3 600.4 660.8 600.9 641.0 620.7 640.5 621.3 640.2 621.7 639.4 622.9 639.3 623.1 638.7 624.4 638.6 624.6 638.4 626.1 638.3 626.2 638.3 627.7 638.4 627.9 638.6 629.3 638.7 629.5 639.3 630.9 639.4 631.0 640.2 632.3 640.5 632.7 641.0 633.2 658.3 650.5 658.9 651.0 659.3 651.4 660.5 652.2 660.7 652.3 662.0 652.9 662.2 652.9 663.7 653.2 663.9 653.2 665.3 653.2 665.5 653.2 667.0 652.9 667.1 652.9 668.5 652.3 668.7 652.2 669.9 651.4 670.3 651.0 670.9 650.5 690.6 630.8 691.1 630.2 691.5 629.8 692.3 628.6 692.4 628.4 692.9 627.0 693.0 626.9 693.3 625.4 693.3 625.2 693.3 623.8 693.3 623.6 693.0 622.1 692.9 622.0 692.4 620.6 692.3 620.4 691.5 619.2 691.1 618.8 690.6 618.2ZM711.2 563.1 710.6 562.6 710.2 562.3 709.0 561.5 708.8 561.4 707.5 560.8 707.3 560.8 705.8 560.5 705.6 560.4 704.2 560.4 704.0 560.5 702.5 560.8 702.4 560.8 701.0 561.4 700.8 561.5 699.6 562.3 699.2 562.6 698.6 563.1 678.9 582.9 678.4 583.4 678.0 583.9 677.2 585.1 677.1 585.3 676.6 586.6 676.5 586.8 676.2 588.2 676.2 588.4 676.2 589.9 676.2 590.1 676.5 591.5 676.6 591.7 677.1 593.1 677.2 593.2 678.0 594.5 678.4 594.9 678.9 595.4 696.2 612.7 696.7 613.2 697.1 613.6 698.4 614.4 698.5 614.5 699.9 615.1 700.1 615.1 701.5 615.4 701.7 615.4 703.2 615.4 703.4 615.4 704.8 615.1 705.0 615.1 706.3 614.5 706.5 614.4 707.7 613.6 708.2 613.2 708.7 612.7 728.5 593.0 729.0 592.4 729.3 592.0 730.1 590.8 730.2 590.6 730.8 589.2 730.9 589.1 731.1 587.6 731.2 587.4 731.2 586.0 731.1 585.8 730.9 584.3 730.8 584.1 730.2 582.8 730.1 582.6 729.3 581.4 729.0 581.0 728.5 580.4ZM749.0 525.3 748.5 524.8 748.1 524.5 746.8 523.6 746.7 523.6 745.3 523.0 745.1 522.9 743.7 522.7 743.5 522.6 742.0 522.6 741.8 522.7 740.4 522.9 740.2 523.0 738.9 523.6 738.7 523.6 737.5 524.5 737.0 524.8 736.5 525.3 716.7 545.1 716.2 545.6 715.9 546.1 715.1 547.3 715.0 547.5 714.4 548.8 714.3 549.0 714.1 550.4 714.0 550.6 714.0 552.1 714.1 552.3 714.3 553.7 714.4 553.9 715.0 555.3 715.1 555.4 715.9 556.7 716.2 557.1 716.7 557.6 734.0 574.9 734.6 575.4 735.0 575.8 736.2 576.6 736.4 576.7 737.7 577.2 737.9 577.3 739.4 577.6 739.6 577.6 741.0 577.6 741.2 577.6 742.7 577.3 742.8 577.2 744.2 576.7 744.4 576.6 745.6 575.8 746.0 575.4 746.6 574.9 766.3 555.2 766.8 554.6 767.2 554.2 768.0 553.0 768.1 552.8 768.7 551.4 768.7 551.2 769.0 549.8 769.0 549.6 769.0 548.1 769.0 548.0 768.7 546.5 768.7 546.3 768.1 545.0 768.0 544.8 767.2 543.6 766.8 543.2 766.3 542.6ZM786.9 487.5 786.3 487.0 785.9 486.7 784.7 485.8 784.5 485.7 783.2 485.2 783.0 485.1 781.5 484.8 781.4 484.8 779.9 484.8 779.7 484.8 778.3 485.1 778.1 485.2 776.7 485.7 776.5 485.8 775.3 486.7 774.9 487.0 774.3 487.5 754.6 507.3 754.1 507.8 753.7 508.3 752.9 509.5 752.8 509.6 752.3 511.0 752.2 511.2 751.9 512.6 751.9 512.8 751.9 514.3 751.9 514.5 752.2 515.9 752.3 516.1 752.8 517.5 752.9 517.6 753.7 518.8 754.1 519.3 754.6 519.8 771.9 537.1 772.4 537.6 772.8 538.0 774.1 538.8 774.2 538.9 775.6 539.4 775.8 539.5 777.2 539.8 777.4 539.8 778.9 539.8 779.1 539.8 780.5 539.5 780.7 539.4 782.0 538.9 782.2 538.8 783.4 538.0 783.9 537.6 784.4 537.1 804.2 517.3 804.7 516.8 805.0 516.4 805.9 515.1 805.9 515.0 806.5 513.6 806.6 513.4 806.8 512.0 806.9 511.8 806.9 510.3 806.8 510.1 806.6 508.7 806.5 508.5 805.9 507.2 805.9 507.0 805.0 505.8 804.7 505.3 804.2 504.8ZM824.7 449.7 824.2 449.2 823.8 448.8 822.5 448.0 822.4 447.9 821.0 447.4 820.8 447.3 819.4 447.0 819.2 447.0 817.7 447.0 817.5 447.0 816.1 447.3 815.9 447.4 814.6 447.9 814.4 448.0 813.2 448.8 812.7 449.2 812.2 449.7 792.4 469.5 791.9 470.0 791.6 470.4 790.8 471.7 790.7 471.8 790.1 473.2 790.1 473.4 789.8 474.8 789.7 475.0 789.7 476.5 789.8 476.7 790.1 478.1 790.1 478.3 790.7 479.6 790.8 479.8 791.6 481.0 791.9 481.5 792.4 482.0 809.7 499.3 810.3 499.8 810.7 500.2 811.9 501.0 812.1 501.1 813.4 501.6 813.6 501.7 815.1 502.0 815.3 502.0 816.7 502.0 816.9 502.0 818.4 501.7 818.5 501.6 819.9 501.1 820.1 501.0 821.3 500.2 821.7 499.8 822.3 499.3 842.0 479.5 842.5 479.0 842.9 478.6 843.7 477.3 843.8 477.2 844.4 475.8 844.4 475.6 844.7 474.2 844.7 474.0 844.7 472.5 844.7 472.3 844.4 470.9 844.4 470.7 843.8 469.4 843.7 469.2 842.9 468.0 842.5 467.5 842.0 467.0ZM862.6 411.9 862.0 411.4 861.6 411.0 860.4 410.2 860.2 410.1 858.9 409.6 858.7 409.5 857.2 409.2 857.1 409.2 855.6 409.2 855.4 409.2 854.0 409.5 853.8 409.6 852.4 410.1 852.3 410.2 851.0 411.0 850.6 411.4 850.1 411.9 830.3 431.7 829.8 432.2 829.4 432.6 828.6 433.9 828.5 434.0 828.0 435.4 827.9 435.6 827.6 437.0 827.6 437.2 827.6 438.7 827.6 438.9 827.9 440.3 828.0 440.5 828.5 441.8 828.6 442.0 829.4 443.2 829.8 443.7 830.3 444.2 847.6 461.5 848.1 462.0 848.6 462.3 849.8 463.2 849.9 463.3 851.3 463.8 851.5 463.9 852.9 464.2 853.1 464.2 854.6 464.2 854.8 464.2 856.2 463.9 856.4 463.8 857.8 463.3 857.9 463.2 859.1 462.3 859.6 462.0 860.1 461.5 879.9 441.7 880.4 441.2 880.7 440.7 881.6 439.5 881.6 439.4 882.2 438.0 882.3 437.8 882.5 436.4 882.6 436.2 882.6 434.7 882.5 434.5 882.3 433.1 882.2 432.9 881.6 431.5 881.6 431.4 880.7 430.2 880.4 429.7 879.9 429.2ZM893.9 382.7 892.8 380.9 891.3 379.5 889.4 378.6 887.3 378.2 885.3 378.3 883.3 379.1 881.6 380.3 868.1 393.8 867.6 394.4 867.3 394.8 866.5 396.0 866.4 396.2 865.8 397.6 865.8 397.8 865.5 399.2 865.5 399.4 865.5 400.9 865.5 401.0 865.8 402.5 865.8 402.7 866.4 404.0 866.5 404.2 867.3 405.4 867.6 405.8 868.1 406.4 885.4 423.7 886.0 424.2 886.4 424.5 887.6 425.4 887.8 425.4 889.2 426.0 889.3 426.1 890.8 426.3 891.0 426.4 892.4 426.4 892.6 426.3 894.1 426.1 894.2 426.0 895.6 425.4 895.8 425.4 897.0 424.5 897.4 424.2 898.0 423.7 902.1 419.6 903.2 418.0 904.0 416.2 904.2 414.3 904.0 412.3 903.8 411.6 903.8 411.5 903.3 409.8 903.3 409.8 902.8 408.1 902.8 408.0 902.3 406.3 902.2 406.3 901.7 404.6 901.7 404.6 901.2 402.9 901.2 402.8 900.7 401.2 900.6 401.1 900.1 399.5 900.1 399.4 899.5 397.8 899.5 397.7 899.0 396.1 898.9 396.1 898.4 394.5 898.4 394.4 897.8 392.8 897.8 392.7 897.2 391.1 897.1 391.1 896.6 389.5 896.5 389.4 895.9 387.9 895.9 387.8 895.3 386.2 895.3 386.2 894.6 384.6 894.6 384.6 894.0 383.0 894.0 383.0ZM657.9 674.5 657.5 675.1 657.2 675.7 657.2 676.3 657.3 677.0 657.5 677.6 657.9 678.1 658.9 679.0 658.9 679.1 660.0 680.1 660.0 680.1 661.1 681.1 661.1 681.1 662.2 682.1 662.2 682.1 663.3 683.1 663.3 683.1 664.5 684.1 664.5 684.1 665.6 685.0 665.6 685.1 666.7 686.0 666.8 686.0 667.9 686.9 667.9 687.0 669.0 687.9 669.1 687.9 670.2 688.8 670.2 688.8 671.4 689.7 671.4 689.7 672.6 690.6 672.6 690.6 673.8 691.4 673.8 691.5 675.0 692.3 675.0 692.3 676.2 693.2 676.2 693.2 677.4 694.0 677.4 694.0 678.6 694.8 678.6 694.8 679.8 695.6 679.8 695.6 681.0 696.4 681.1 696.4 682.3 697.2 682.3 697.2 683.5 697.9 683.5 697.9 684.8 698.7 684.8 698.7 686.0 699.4 686.0 699.4 687.1 700.0 687.7 700.3 688.3 700.3 688.9 700.3 689.5 700.1 690.0 699.7 690.4 699.2 690.7 698.7 690.8 698.1 690.8 698.0 690.8 697.5 690.7 696.3 690.6 695.9 690.3 694.7 690.1 694.3 689.5 693.2 689.3 692.8 688.4 691.8 688.3 691.6 670.6 674.0 670.4 673.8 669.4 673.0 669.0 672.7 668.0 672.2 667.5 672.0 666.4 671.7 665.9 671.6 664.8 671.5 664.3 671.5 663.1 671.6 662.6 671.7 661.5 672.0 661.1 672.2 660.0 672.7 659.6 673.0 658.6 673.8 658.4 674.0ZM708.6 636.4 708.1 635.9 707.7 635.5 706.4 634.7 706.3 634.6 704.9 634.1 704.7 634.0 703.3 633.7 703.1 633.7 701.6 633.7 701.5 633.7 700.0 634.0 699.8 634.1 698.5 634.6 698.3 634.7 697.1 635.5 696.7 635.9 696.1 636.4 676.3 656.1 675.8 656.7 675.5 657.1 674.7 658.3 674.6 658.5 674.0 659.9 674.0 660.0 673.7 661.5 673.7 661.7 673.7 663.1 673.7 663.3 674.0 664.8 674.0 665.0 674.6 666.3 674.7 666.5 675.5 667.7 675.8 668.1 676.3 668.7 693.6 686.0 694.2 686.5 694.6 686.8 695.8 687.6 696.0 687.7 697.4 688.3 697.5 688.4 699.0 688.6 699.2 688.7 700.6 688.7 700.8 688.6 702.3 688.4 702.4 688.3 703.8 687.7 704.0 687.6 705.2 686.8 705.6 686.5 706.2 686.0 725.9 666.2 726.4 665.7 726.8 665.2 727.6 664.0 727.7 663.8 728.3 662.5 728.3 662.3 728.6 660.9 728.6 660.7 728.6 659.2 728.6 659.0 728.3 657.6 728.3 657.4 727.7 656.0 727.6 655.9 726.8 654.6 726.4 654.2 725.9 653.7ZM746.5 598.6 746.0 598.1 745.5 597.7 744.3 596.9 744.1 596.8 742.8 596.2 742.6 596.2 741.2 595.9 741.0 595.9 739.5 595.9 739.3 595.9 737.9 596.2 737.7 596.2 736.3 596.8 736.2 596.9 734.9 597.7 734.5 598.1 734.0 598.6 714.2 618.3 713.7 618.9 713.3 619.3 712.5 620.5 712.4 620.7 711.9 622.1 711.8 622.2 711.5 623.7 711.5 623.9 711.5 625.3 711.5 625.5 711.8 627.0 711.9 627.1 712.4 628.5 712.5 628.7 713.3 629.9 713.7 630.3 714.2 630.9 731.5 648.2 732.0 648.7 732.5 649.0 733.7 649.8 733.9 649.9 735.2 650.5 735.4 650.5 736.8 650.8 737.0 650.8 738.5 650.8 738.7 650.8 740.1 650.5 740.3 650.5 741.7 649.9 741.8 649.8 743.0 649.0 743.5 648.7 744.0 648.2 763.8 628.4 764.3 627.9 764.6 627.4 765.5 626.2 765.6 626.0 766.1 624.7 766.2 624.5 766.5 623.0 766.5 622.9 766.5 621.4 766.5 621.2 766.2 619.8 766.1 619.6 765.6 618.2 765.5 618.1 764.6 616.8 764.3 616.4 763.8 615.9ZM784.4 560.7 783.8 560.3 783.4 559.9 782.2 559.1 782.0 559.0 780.6 558.4 780.4 558.4 779.0 558.1 778.8 558.1 777.3 558.1 777.2 558.1 775.7 558.4 775.5 558.4 774.2 559.0 774.0 559.1 772.8 559.9 772.4 560.3 771.8 560.7 752.0 580.5 751.5 581.1 751.2 581.5 750.4 582.7 750.3 582.9 749.7 584.2 749.7 584.4 749.4 585.9 749.4 586.1 749.4 587.5 749.4 587.7 749.7 589.2 749.7 589.3 750.3 590.7 750.4 590.9 751.2 592.1 751.5 592.5 752.0 593.1 769.3 610.4 769.9 610.9 770.3 611.2 771.5 612.0 771.7 612.1 773.1 612.7 773.2 612.7 774.7 613.0 774.9 613.0 776.3 613.0 776.5 613.0 778.0 612.7 778.2 612.7 779.5 612.1 779.7 612.0 780.9 611.2 781.3 610.9 781.9 610.4 801.7 590.6 802.1 590.0 802.5 589.6 803.3 588.4 803.4 588.2 804.0 586.9 804.0 586.7 804.3 585.2 804.3 585.1 804.3 583.6 804.3 583.4 804.0 582.0 804.0 581.8 803.4 580.4 803.3 580.2 802.5 579.0 802.1 578.6 801.7 578.0ZM822.2 522.9 821.7 522.4 821.2 522.1 820.0 521.3 819.8 521.2 818.5 520.6 818.3 520.6 816.9 520.3 816.7 520.3 815.2 520.3 815.0 520.3 813.6 520.6 813.4 520.6 812.0 521.2 811.9 521.3 810.6 522.1 810.2 522.4 809.7 522.9 789.9 542.7 789.4 543.3 789.0 543.7 788.2 544.9 788.1 545.1 787.6 546.4 787.5 546.6 787.2 548.1 787.2 548.2 787.2 549.7 787.2 549.9 787.5 551.3 787.6 551.5 788.1 552.9 788.2 553.1 789.0 554.3 789.4 554.7 789.9 555.3 807.2 572.6 807.7 573.0 808.2 573.4 809.4 574.2 809.6 574.3 810.9 574.9 811.1 574.9 812.5 575.2 812.7 575.2 814.2 575.2 814.4 575.2 815.8 574.9 816.0 574.9 817.4 574.3 817.5 574.2 818.8 573.4 819.2 573.0 819.7 572.6 839.5 552.8 840.0 552.2 840.4 551.8 841.2 550.6 841.3 550.4 841.8 549.1 841.9 548.9 842.2 547.4 842.2 547.2 842.2 545.8 842.2 545.6 841.9 544.1 841.8 544.0 841.3 542.6 841.2 542.4 840.4 541.2 840.0 540.8 839.5 540.2ZM860.1 485.1 859.5 484.6 859.1 484.3 857.9 483.5 857.7 483.4 856.3 482.8 856.2 482.8 854.7 482.5 854.5 482.4 853.1 482.4 852.9 482.5 851.4 482.8 851.2 482.8 849.9 483.4 849.7 483.5 848.5 484.3 848.1 484.6 847.5 485.1 827.7 504.9 827.2 505.4 826.9 505.9 826.1 507.1 826.0 507.3 825.4 508.6 825.4 508.8 825.1 510.2 825.1 510.4 825.1 511.9 825.1 512.1 825.4 513.5 825.4 513.7 826.0 515.1 826.1 515.2 826.9 516.5 827.2 516.9 827.7 517.4 845.0 534.7 845.6 535.2 846.0 535.6 847.2 536.4 847.4 536.5 848.8 537.1 848.9 537.1 850.4 537.4 850.6 537.4 852.0 537.4 852.2 537.4 853.7 537.1 853.9 537.1 855.2 536.5 855.4 536.4 856.6 535.6 857.0 535.2 857.6 534.7 877.4 515.0 877.8 514.4 878.2 514.0 879.0 512.8 879.1 512.6 879.7 511.2 879.7 511.1 880.0 509.6 880.0 509.4 880.0 508.0 880.0 507.8 879.7 506.3 879.7 506.2 879.1 504.8 879.0 504.6 878.2 503.4 877.8 503.0 877.4 502.4ZM897.9 447.3 897.4 446.8 896.9 446.5 895.7 445.7 895.5 445.6 894.2 445.0 894.0 444.9 892.6 444.7 892.4 444.6 890.9 444.6 890.7 444.7 889.3 444.9 889.1 445.0 887.7 445.6 887.6 445.7 886.3 446.5 885.9 446.8 885.4 447.3 865.6 467.1 865.1 467.6 864.7 468.1 863.9 469.3 863.8 469.5 863.3 470.8 863.2 471.0 862.9 472.4 862.9 472.6 862.9 474.1 862.9 474.3 863.2 475.7 863.3 475.9 863.8 477.3 863.9 477.4 864.7 478.7 865.1 479.1 865.6 479.6 882.9 496.9 883.4 497.4 883.9 497.8 885.1 498.6 885.3 498.7 886.6 499.2 886.8 499.3 888.2 499.6 888.4 499.6 889.9 499.6 890.1 499.6 891.5 499.3 891.7 499.2 893.1 498.7 893.2 498.6 894.5 497.8 894.9 497.4 895.4 496.9 911.8 480.6 913.0 478.9 913.8 477.0 913.9 474.9 913.9 474.4 913.9 474.4 913.8 472.3 913.8 472.3 913.6 470.3 913.6 470.2 913.5 468.3 913.5 468.2 913.3 466.2 913.3 466.2 913.2 465.1 912.9 463.4 912.2 461.8 911.1 460.5ZM903.3 429.5 903.1 429.6 902.3 430.6 902.0 431.0 901.5 432.1 901.3 432.5 900.9 433.7 900.8 434.1 900.7 435.3 900.7 435.8 900.8 437.0 900.9 437.4 901.3 438.6 901.5 439.0 902.0 440.1 902.3 440.5 903.1 441.5 903.3 441.6 906.2 444.6 906.7 445.0 907.3 445.2 907.9 445.3 908.5 445.3 909.1 445.1 909.6 444.7 910.1 444.2 910.3 443.7 910.5 443.1 910.5 442.4 910.2 440.8 910.2 440.8 909.9 438.9 909.9 438.9 909.5 437.0 909.5 437.0 909.2 435.1 909.2 435.1 908.8 433.3 908.8 433.3 908.5 431.4 908.5 431.4 908.2 430.0 908.0 429.4 907.6 428.8 907.1 428.4 906.5 428.1 905.8 428.0 905.1 428.1 904.5 428.3 904.0 428.7ZM719.2 711.7 720.9 713.0 722.9 713.7 723.8 713.9 723.8 713.9 725.2 714.2 725.3 714.2 726.7 714.5 726.7 714.5 728.1 714.8 728.2 714.8 729.6 715.0 729.7 715.0 731.1 715.3 731.1 715.3 732.5 715.5 732.6 715.5 734.0 715.7 734.1 715.7 735.5 715.9 735.6 715.9 737.1 716.1 737.1 716.1 738.6 716.2 738.7 716.2 740.1 716.4 740.2 716.4 741.7 716.5 741.7 716.5 742.6 716.6 744.8 716.4 746.8 715.7 748.5 714.4 761.3 701.6 761.8 701.1 762.1 700.7 762.9 699.4 763.0 699.3 763.6 697.9 763.6 697.7 763.9 696.3 763.9 696.1 763.9 694.6 763.9 694.4 763.6 693.0 763.6 692.8 763.0 691.5 762.9 691.3 762.1 690.1 761.8 689.6 761.3 689.1 744.0 671.8 743.4 671.3 743.0 671.0 741.8 670.1 741.6 670.0 740.2 669.5 740.1 669.4 738.6 669.1 738.4 669.1 737.0 669.1 736.8 669.1 735.3 669.4 735.1 669.5 733.8 670.0 733.6 670.1 732.4 671.0 732.0 671.3 731.4 671.8 711.7 691.6 711.2 692.1 710.8 692.6 710.0 693.8 709.9 693.9 709.3 695.3 709.3 695.5 709.0 696.9 709.0 697.1 709.0 698.6 709.0 698.8 709.3 700.2 709.3 700.4 709.9 701.7 710.0 701.9 710.8 703.1 711.2 703.6 711.7 704.1ZM781.8 634.0 781.3 633.5 780.8 633.1 779.6 632.3 779.5 632.2 778.1 631.7 777.9 631.6 776.5 631.3 776.3 631.3 774.8 631.3 774.6 631.3 773.2 631.6 773.0 631.7 771.6 632.2 771.5 632.3 770.3 633.1 769.8 633.5 769.3 634.0 749.5 653.8 749.0 654.3 748.7 654.7 747.8 656.0 747.7 656.1 747.2 657.5 747.1 657.7 746.8 659.1 746.8 659.3 746.8 660.8 746.8 661.0 747.1 662.4 747.2 662.6 747.7 663.9 747.8 664.1 748.7 665.3 749.0 665.8 749.5 666.3 766.8 683.6 767.3 684.1 767.8 684.5 769.0 685.3 769.2 685.4 770.5 685.9 770.7 686.0 772.1 686.3 772.3 686.3 773.8 686.3 774.0 686.3 775.4 686.0 775.6 685.9 777.0 685.4 777.1 685.3 778.4 684.5 778.8 684.1 779.3 683.6 799.1 663.8 799.6 663.3 800.0 662.9 800.8 661.6 800.9 661.5 801.4 660.1 801.5 659.9 801.8 658.5 801.8 658.3 801.8 656.8 801.8 656.6 801.5 655.2 801.4 655.0 800.9 653.7 800.8 653.5 800.0 652.3 799.6 651.8 799.1 651.3ZM819.7 596.2 819.1 595.7 818.7 595.3 817.5 594.5 817.3 594.4 815.9 593.9 815.8 593.8 814.3 593.5 814.1 593.5 812.7 593.5 812.5 593.5 811.0 593.8 810.9 593.9 809.5 594.4 809.3 594.5 808.1 595.3 807.7 595.7 807.1 596.2 787.4 616.0 786.9 616.5 786.5 616.9 785.7 618.2 785.6 618.3 785.0 619.7 785.0 619.9 784.7 621.3 784.7 621.5 784.7 623.0 784.7 623.1 785.0 624.6 785.0 624.8 785.6 626.1 785.7 626.3 786.5 627.5 786.9 628.0 787.4 628.5 804.7 645.8 805.2 646.3 805.6 646.6 806.9 647.5 807.0 647.5 808.4 648.1 808.6 648.2 810.0 648.5 810.2 648.5 811.7 648.5 811.8 648.5 813.3 648.2 813.5 648.1 814.8 647.5 815.0 647.5 816.2 646.6 816.7 646.3 817.2 645.8 837.0 626.0 837.5 625.5 837.8 625.0 838.6 623.8 838.7 623.7 839.3 622.3 839.3 622.1 839.6 620.7 839.6 620.5 839.6 619.0 839.6 618.8 839.3 617.4 839.3 617.2 838.7 615.8 838.6 615.7 837.8 614.5 837.5 614.0 837.0 613.5ZM857.5 558.4 857.0 557.9 856.5 557.5 855.3 556.7 855.2 556.6 853.8 556.1 853.6 556.0 852.2 555.7 852.0 555.7 850.5 555.7 850.3 555.7 848.9 556.0 848.7 556.1 847.3 556.6 847.2 556.7 846.0 557.5 845.5 557.9 845.0 558.4 825.2 578.1 824.7 578.7 824.4 579.1 823.5 580.3 823.5 580.5 822.9 581.9 822.8 582.1 822.5 583.5 822.5 583.7 822.5 585.2 822.5 585.3 822.8 586.8 822.9 587.0 823.5 588.3 823.5 588.5 824.4 589.7 824.7 590.1 825.2 590.7 842.5 608.0 843.1 608.5 843.5 608.8 844.7 609.7 844.9 609.7 846.2 610.3 846.4 610.4 847.9 610.6 848.0 610.7 849.5 610.7 849.7 610.6 851.1 610.4 851.3 610.3 852.7 609.7 852.8 609.7 854.1 608.8 854.5 608.5 855.0 608.0 874.8 588.2 875.3 587.7 875.7 587.2 876.5 586.0 876.6 585.8 877.1 584.5 877.2 584.3 877.5 582.9 877.5 582.7 877.5 581.2 877.5 581.0 877.2 579.6 877.1 579.4 876.6 578.0 876.5 577.9 875.7 576.6 875.3 576.2 874.8 575.7ZM895.4 520.6 894.8 520.1 894.4 519.7 893.2 518.9 893.0 518.8 891.6 518.2 891.5 518.2 890.0 517.9 889.8 517.9 888.4 517.9 888.2 517.9 886.7 518.2 886.6 518.2 885.2 518.8 885.0 518.9 883.8 519.7 883.4 520.1 882.8 520.6 863.1 540.3 862.6 540.9 862.2 541.3 861.4 542.5 861.3 542.7 860.7 544.1 860.7 544.2 860.4 545.7 860.4 545.9 860.4 547.3 860.4 547.5 860.7 549.0 860.7 549.2 861.3 550.5 861.4 550.7 862.2 551.9 862.6 552.3 863.1 552.9 880.4 570.2 880.9 570.7 881.3 571.0 882.6 571.8 882.7 571.9 884.1 572.5 884.3 572.5 885.7 572.8 885.9 572.9 887.4 572.9 887.6 572.8 889.0 572.5 889.2 572.5 890.5 571.9 890.7 571.8 891.9 571.0 892.4 570.7 892.9 570.2 909.2 553.8 910.6 551.9 911.4 549.6 911.4 549.6 911.4 549.6 911.6 547.7 911.6 547.6 911.9 545.7 911.9 545.7 912.1 543.8 912.1 543.7 912.3 541.8 912.3 541.8 912.4 541.5 912.3 539.3 911.5 537.2 910.2 535.4ZM900.9 502.5 900.4 503.1 900.1 503.5 899.2 504.7 899.2 504.9 898.6 506.2 898.5 506.4 898.3 507.9 898.2 508.1 898.2 509.5 898.3 509.7 898.5 511.2 898.6 511.3 899.2 512.7 899.2 512.9 900.1 514.1 900.4 514.5 900.9 515.1 901.7 515.8 903.2 517.0 905.0 517.7 906.9 518.0 908.8 517.8 910.6 517.1 912.2 515.9 913.4 514.4 914.2 512.6 914.5 510.7 914.5 508.6 914.5 508.6 914.5 507.1 914.3 505.2 913.6 503.3 912.4 501.8 910.8 500.5 909.0 499.8 907.1 499.5 905.1 499.8 903.3 500.5 901.7 501.7ZM761.4 712.6 761.0 713.1 760.8 713.7 760.7 714.4 760.8 715.0 761.0 715.6 761.5 716.1 762.0 716.5 762.6 716.8 763.3 716.8 763.7 716.8 763.8 716.8 765.3 716.7 765.4 716.7 766.9 716.6 766.9 716.6 768.5 716.5 768.5 716.5 770.0 716.4 770.1 716.4 771.6 716.2 771.6 716.2 773.1 716.1 773.1 716.1 774.6 715.9 774.6 715.9 776.1 715.7 776.1 715.7 777.6 715.5 777.6 715.5 779.1 715.3 779.1 715.3 780.6 715.0 780.6 715.0 781.4 714.9 782.0 714.7 782.6 714.3 783.0 713.8 783.3 713.2 783.4 712.5 783.4 711.8 783.1 711.2 782.7 710.7 779.1 707.1 778.9 706.9 777.9 706.1 777.5 705.8 776.5 705.2 776.0 705.1 774.9 704.7 774.4 704.6 773.3 704.5 772.8 704.5 771.6 704.6 771.1 704.7 770.0 705.1 769.5 705.2 768.5 705.8 768.1 706.1 767.1 706.9 766.9 707.1ZM791.7 708.6 793.3 709.9 795.3 710.6 797.3 710.8 799.3 710.4 800.4 710.1 800.5 710.1 801.8 709.6 801.9 709.6 803.2 709.1 803.2 709.1 804.5 708.7 804.6 708.6 805.9 708.1 805.9 708.1 807.2 707.6 807.3 707.6 808.6 707.1 808.6 707.0 809.9 706.5 810.0 706.5 811.2 705.9 811.3 705.9 812.5 705.4 812.6 705.3 813.9 704.8 813.9 704.7 815.2 704.1 815.2 704.1 816.5 703.5 816.5 703.5 817.8 702.9 817.8 702.8 819.0 702.2 819.1 702.2 820.3 701.5 820.4 701.5 821.6 700.9 821.7 700.8 822.9 700.2 822.9 700.1 824.1 699.4 824.2 699.4 825.4 698.7 825.5 698.7 826.6 698.0 826.7 697.9 827.9 697.2 828.0 697.2 829.1 696.4 829.2 696.4 830.4 695.6 830.4 695.6 830.5 695.5 831.9 694.3 833.0 692.8 833.7 691.0 833.9 689.1 833.6 687.2 832.8 685.5 831.7 684.0 817.1 669.4 816.6 668.9 816.2 668.6 814.9 667.8 814.8 667.7 813.4 667.1 813.2 667.1 811.8 666.8 811.6 666.7 810.1 666.7 809.9 666.8 808.5 667.1 808.3 667.1 807.0 667.7 806.8 667.8 805.6 668.6 805.1 668.9 804.6 669.4 784.8 689.2 784.3 689.7 784.0 690.2 783.2 691.4 783.1 691.6 782.5 692.9 782.4 693.1 782.2 694.5 782.1 694.7 782.1 696.2 782.2 696.4 782.4 697.8 782.5 698.0 783.1 699.4 783.2 699.5 784.0 700.8 784.3 701.2 784.8 701.7ZM839.2 680.4 840.7 681.6 842.5 682.4 844.3 682.6 846.2 682.4 848.0 681.8 849.6 680.7 850.2 680.1 850.2 680.1 851.3 679.1 851.3 679.0 852.4 678.0 852.4 678.0 853.4 677.0 853.5 676.9 854.5 675.9 854.6 675.8 855.6 674.8 855.6 674.7 856.7 673.7 856.7 673.6 857.7 672.6 857.8 672.5 858.7 671.5 858.8 671.4 859.8 670.3 859.8 670.3 860.8 669.2 860.9 669.1 861.8 668.0 861.9 667.9 862.8 666.8 862.9 666.8 863.8 665.6 863.9 665.6 864.8 664.4 864.9 664.4 865.8 663.2 865.9 663.2 866.8 662.0 866.8 661.9 867.8 660.7 867.8 660.7 868.7 659.5 868.8 659.4 869.7 658.2 869.7 658.2 870.6 656.9 870.7 656.9 870.9 656.5 871.9 654.6 872.4 652.6 872.2 650.5 871.4 648.5 870.2 646.8 855.0 631.6 854.4 631.1 854.0 630.8 852.8 629.9 852.6 629.9 851.3 629.3 851.1 629.2 849.6 629.0 849.5 628.9 848.0 628.9 847.8 629.0 846.4 629.2 846.2 629.3 844.8 629.9 844.6 629.9 843.4 630.8 843.0 631.1 842.4 631.6 822.7 651.4 822.2 651.9 821.8 652.4 821.0 653.6 820.9 653.8 820.4 655.1 820.3 655.3 820.0 656.7 820.0 656.9 820.0 658.4 820.0 658.6 820.3 660.0 820.4 660.2 820.9 661.6 821.0 661.7 821.8 663.0 822.2 663.4 822.7 663.9ZM872.1 637.7 873.6 638.9 875.5 639.6 877.4 639.8 879.4 639.6 881.2 638.8 882.8 637.5 883.9 635.9 884.5 635.0 884.5 634.9 885.3 633.5 885.3 633.4 886.0 632.0 886.1 632.0 886.8 630.5 886.8 630.5 887.6 629.0 887.6 629.0 888.3 627.5 888.3 627.4 889.1 626.0 889.1 625.9 889.8 624.4 889.8 624.4 890.5 622.9 890.5 622.8 891.2 621.3 891.2 621.3 891.9 619.8 891.9 619.7 892.6 618.2 892.6 618.2 893.3 616.6 893.3 616.6 894.0 615.0 894.0 615.0 894.6 613.4 894.6 613.4 895.3 611.8 895.3 611.8 895.9 610.2 895.9 610.1 896.5 608.6 896.6 608.5 897.1 606.9 897.2 606.9 897.8 605.3 897.8 605.2 897.9 604.9 898.3 602.9 898.1 600.8 897.4 598.8 896.1 597.1 892.8 593.8 892.3 593.3 891.9 593.0 890.6 592.1 890.5 592.1 889.1 591.5 888.9 591.4 887.5 591.1 887.3 591.1 885.8 591.1 885.6 591.1 884.2 591.4 884.0 591.5 882.7 592.1 882.5 592.1 881.3 593.0 880.8 593.3 880.3 593.8 860.5 613.6 860.0 614.1 859.7 614.6 858.9 615.8 858.8 615.9 858.2 617.3 858.2 617.5 857.9 618.9 857.8 619.1 857.8 620.6 857.9 620.8 858.2 622.2 858.2 622.4 858.8 623.8 858.9 623.9 859.7 625.1 860.0 625.6 860.5 626.1ZM898.2 575.9 898.0 576.1 897.2 577.1 896.9 577.5 896.4 578.6 896.2 579.0 895.9 580.1 895.8 580.6 895.7 581.8 895.7 582.3 895.8 583.5 895.9 583.9 896.2 585.1 896.4 585.5 896.9 586.5 897.2 587.0 898.0 588.0 898.2 588.1 899.2 589.1 899.7 589.5 900.3 589.7 900.9 589.8 901.6 589.7 902.2 589.5 902.7 589.1 903.1 588.6 903.3 588.0 903.8 586.5 903.8 586.4 904.2 584.7 904.3 584.7 904.7 582.9 904.7 582.9 905.2 581.2 905.2 581.1 905.6 579.4 905.6 579.3 906.1 577.6 906.1 577.6 906.5 575.8 906.5 575.7 906.9 573.9 906.9 573.9 907.0 573.7 907.0 573.1 906.9 572.4 906.7 571.8 906.3 571.3 905.7 571.0 905.1 570.7 904.5 570.6 903.9 570.7 903.3 571.0 902.8 571.4Z"/>
<rect x="482.7" y="205.9" width="563.2" height="553.1" fill="none" stroke="#f13a3e" stroke-width="5.4"/>
</svg>
</body></html>
